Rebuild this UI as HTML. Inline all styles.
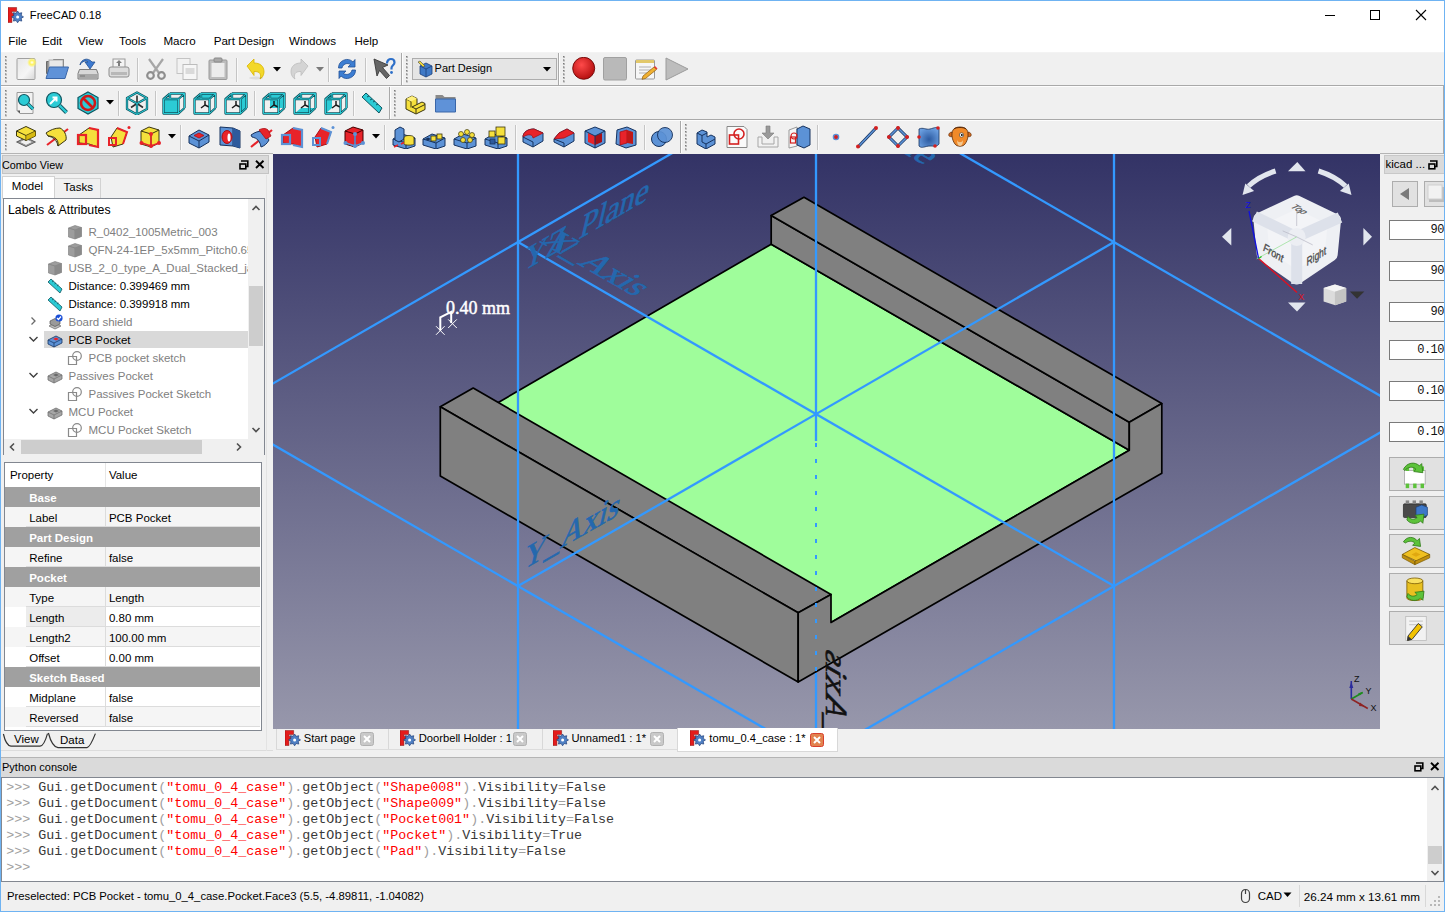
<!DOCTYPE html><html><head><meta charset="utf-8"><style>
html,body{margin:0;padding:0;}
body{width:1445px;height:912px;position:relative;overflow:hidden;background:#f0f0f0;font-family:"Liberation Sans",sans-serif;}
.t{position:absolute;line-height:1;white-space:nowrap;}
</style></head><body>
<div style="position:absolute;left:0px;top:0px;width:1445px;height:52px;background:#fff"></div>
<div style="position:absolute;left:0px;top:52px;width:1445px;height:1px;background:#f3f3f3"></div>
<div class="t" style="left:29.8px;top:10.22px;font-size:11.2px;color:#000;font-weight:normal;font-family:'Liberation Sans', sans-serif;">FreeCAD 0.18</div>
<svg style="position:absolute;left:8.3px;top:7.0px" width="16" height="16" viewBox="0 0 16 16"><path d="M0 0.4h8.6v4.2H3.9v1.6h2.8v2.9H3.9v6.5H0z" fill="#e41c1c" stroke="#7a0a0a" stroke-width=".5"/><polygon points="9.60,4.00 11.09,6.30 13.77,5.73 13.20,8.41 15.50,9.90 13.20,11.39 13.77,14.07 11.09,13.50 9.60,15.80 8.11,13.50 5.43,14.07 6.00,11.39 3.70,9.90 6.00,8.41 5.43,5.73 8.11,6.30" fill="#4f80c4" stroke="#1f3f7a" stroke-width=".7" stroke-linejoin="round"/><circle cx="9.6" cy="9.9" r="1.5" fill="#fff"/></svg>
<div class="t" style="left:8.3px;top:35.28px;font-size:11.6px;color:#000;font-weight:normal;font-family:'Liberation Sans', sans-serif;">File</div>
<div class="t" style="left:42.1px;top:35.28px;font-size:11.6px;color:#000;font-weight:normal;font-family:'Liberation Sans', sans-serif;">Edit</div>
<div class="t" style="left:78.1px;top:35.28px;font-size:11.6px;color:#000;font-weight:normal;font-family:'Liberation Sans', sans-serif;">View</div>
<div class="t" style="left:119.1px;top:35.28px;font-size:11.6px;color:#000;font-weight:normal;font-family:'Liberation Sans', sans-serif;">Tools</div>
<div class="t" style="left:163.4px;top:35.28px;font-size:11.6px;color:#000;font-weight:normal;font-family:'Liberation Sans', sans-serif;">Macro</div>
<div class="t" style="left:213.7px;top:35.28px;font-size:11.6px;color:#000;font-weight:normal;font-family:'Liberation Sans', sans-serif;">Part Design</div>
<div class="t" style="left:289.0px;top:35.28px;font-size:11.6px;color:#000;font-weight:normal;font-family:'Liberation Sans', sans-serif;">Windows</div>
<div class="t" style="left:354.4px;top:35.28px;font-size:11.6px;color:#000;font-weight:normal;font-family:'Liberation Sans', sans-serif;">Help</div>
<svg style="position:absolute;left:1320px;top:5px;" width="110" height="22" viewBox="0 0 110 22"><path d="M5 10.5h10" stroke="#000" stroke-width="1"/><rect x="50.5" y="5.5" width="9" height="9" fill="none" stroke="#000" stroke-width="1"/><path d="M96 5l10 10M106 5l-10 10" stroke="#000" stroke-width="1.1"/></svg>
<div style="position:absolute;left:0px;top:85px;width:1445px;height:1px;background:#a9a9a9"></div>
<div style="position:absolute;left:0px;top:86px;width:1445px;height:1px;background:#fdfdfd"></div>
<div style="position:absolute;left:0px;top:119px;width:1445px;height:1px;background:#a9a9a9"></div>
<div style="position:absolute;left:0px;top:120px;width:1445px;height:1px;background:#fdfdfd"></div>
<div style="position:absolute;left:1px;top:153px;width:272px;height:1px;background:#b4b4b4"></div>
<div style="position:absolute;left:2px;top:155px;width:267px;height:19px;background:#dadada;border:1px solid #c4c4c4;box-sizing:border-box"></div>
<div class="t" style="left:2.0px;top:159.56px;font-size:10.8px;color:#000;font-weight:normal;font-family:'Liberation Sans', sans-serif;">Combo View</div>
<svg style="position:absolute;left:236px;top:158px;" width="30" height="14" viewBox="0 0 30 14"><path d="M5 3h6.8v5.5H9.5" fill="none" stroke="#000" stroke-width="1.6"/><rect x="4" y="6" width="5.8" height="4.8" fill="none" stroke="#000" stroke-width="1.6"/><path d="M20 2.8l7.5 7.2M27.5 2.8L20 10" stroke="#000" stroke-width="1.9"/></svg>
<div style="position:absolute;left:54px;top:178px;width:47px;height:21px;background:#f0f0f0;border:1px solid #d2d2d2;box-sizing:border-box"></div>
<div style="position:absolute;left:2px;top:176px;width:53px;height:23px;background:#fff;border:1px solid #d2d2d2;border-bottom:none;box-sizing:border-box"></div>
<div class="t" style="left:11.8px;top:180.77px;font-size:11.5px;color:#000;font-weight:normal;font-family:'Liberation Sans', sans-serif;">Model</div>
<div class="t" style="left:63.6px;top:181.77px;font-size:11.5px;color:#000;font-weight:normal;font-family:'Liberation Sans', sans-serif;">Tasks</div>
<div style="position:absolute;left:3px;top:198px;width:262px;height:257px;background:#fff;border:1px solid #828790;box-sizing:border-box"></div>
<div class="t" style="left:8.0px;top:204.19px;font-size:12.3px;color:#000;font-weight:normal;font-family:'Liberation Sans', sans-serif;">Labels &amp; Attributes</div>
<div style="position:absolute;left:248px;top:199px;width:16px;height:240px;background:#f0f0f0"></div>
<div style="position:absolute;left:249px;top:286px;width:14px;height:60px;background:#cdcdcd"></div>
<div style="position:absolute;left:4px;top:439px;width:260px;height:16px;background:#f0f0f0"></div>
<div style="position:absolute;left:21px;top:440px;width:181px;height:14px;background:#cdcdcd"></div>
<svg style="position:absolute;left:248px;top:200px;" width="16" height="16" viewBox="0 0 16 16"><path d="M4.5 10l3.5-3.5 3.5 3.5" fill="none" stroke="#505050" stroke-width="1.6"/></svg>
<svg style="position:absolute;left:248px;top:422px;" width="16" height="16" viewBox="0 0 16 16"><path d="M4.5 6l3.5 3.5 3.5-3.5" fill="none" stroke="#505050" stroke-width="1.6"/></svg>
<svg style="position:absolute;left:4px;top:439px;" width="16" height="16" viewBox="0 0 16 16"><path d="M10 4.5l-3.5 3.5 3.5 3.5" fill="none" stroke="#505050" stroke-width="1.6"/></svg>
<svg style="position:absolute;left:231px;top:439px;" width="16" height="16" viewBox="0 0 16 16"><path d="M6 4.5l3.5 3.5-3.5 3.5" fill="none" stroke="#505050" stroke-width="1.6"/></svg>
<div style="position:absolute;left:44px;top:331px;width:204px;height:17px;background:#d9d9d9"></div>
<div style="position:absolute;left:4px;top:222px;width:244px;height:217px;overflow:hidden"><div style="position:absolute;left:-4px;top:-222px;width:400px;height:700px"><div class="t" style="left:88.5px;top:226.97px;font-size:11.5px;color:#808080;font-weight:normal;font-family:'Liberation Sans', sans-serif;">R_0402_1005Metric_003</div><svg style="position:absolute;left:67.0px;top:223.5px" width="16" height="16" viewBox="0 0 16 16"><path d="M1.5 4L8 1.5 14.5 3.5v9L8 15 1.5 13z" fill="#9d9d9d" stroke="#7a7a7a" stroke-width=".6"/><path d="M1.5 4L8 6l6.5-2.5M8 6v9" fill="none" stroke="#7e7e7e" stroke-width=".7"/><path d="M8 6l6.5-2.5v9L8 15z" fill="#8a8a8a"/></svg><div class="t" style="left:88.5px;top:244.97px;font-size:11.5px;color:#808080;font-weight:normal;font-family:'Liberation Sans', sans-serif;">QFN-24-1EP_5x5mm_Pitch0.65mm</div><svg style="position:absolute;left:67.0px;top:241.5px" width="16" height="16" viewBox="0 0 16 16"><path d="M1.5 4L8 1.5 14.5 3.5v9L8 15 1.5 13z" fill="#9d9d9d" stroke="#7a7a7a" stroke-width=".6"/><path d="M1.5 4L8 6l6.5-2.5M8 6v9" fill="none" stroke="#7e7e7e" stroke-width=".7"/><path d="M8 6l6.5-2.5v9L8 15z" fill="#8a8a8a"/></svg><div class="t" style="left:68.5px;top:262.97px;font-size:11.5px;color:#808080;font-weight:normal;font-family:'Liberation Sans', sans-serif;">USB_2_0_type_A_Dual_Stacked_jack</div><svg style="position:absolute;left:47.0px;top:259.5px" width="16" height="16" viewBox="0 0 16 16"><path d="M1.5 4L8 1.5 14.5 3.5v9L8 15 1.5 13z" fill="#9d9d9d" stroke="#7a7a7a" stroke-width=".6"/><path d="M1.5 4L8 6l6.5-2.5M8 6v9" fill="none" stroke="#7e7e7e" stroke-width=".7"/><path d="M8 6l6.5-2.5v9L8 15z" fill="#8a8a8a"/></svg><div class="t" style="left:68.5px;top:280.97px;font-size:11.5px;color:#000;font-weight:normal;font-family:'Liberation Sans', sans-serif;">Distance: 0.399469 mm</div><svg style="position:absolute;left:47.0px;top:277.5px" width="16" height="16" viewBox="0 0 16 16"><path d="M1 4l3-3 11 10-2 4z" fill="#2ccbd5" stroke="#0f5560" stroke-width=".8"/><path d="M5 4l1.5-1M7.5 6l1.5-1M10 8l1.5-1" stroke="#0f5560" stroke-width=".8"/></svg><div class="t" style="left:68.5px;top:298.97px;font-size:11.5px;color:#000;font-weight:normal;font-family:'Liberation Sans', sans-serif;">Distance: 0.399918 mm</div><svg style="position:absolute;left:47.0px;top:295.5px" width="16" height="16" viewBox="0 0 16 16"><path d="M1 4l3-3 11 10-2 4z" fill="#2ccbd5" stroke="#0f5560" stroke-width=".8"/><path d="M5 4l1.5-1M7.5 6l1.5-1M10 8l1.5-1" stroke="#0f5560" stroke-width=".8"/></svg><div class="t" style="left:68.5px;top:316.97px;font-size:11.5px;color:#808080;font-weight:normal;font-family:'Liberation Sans', sans-serif;">Board shield</div><svg style="position:absolute;left:47.0px;top:313.5px" width="16" height="16" viewBox="0 0 16 16"><path d="M2 12l6-3 6 3-6 3z" fill="#bdbdbd" stroke="#666" stroke-width=".7"/><path d="M3 7l5-2.5 5 2.5v3l-5 2.5-5-2.5z" fill="#9a9a9a" stroke="#555" stroke-width=".7"/><circle cx="12" cy="4" r="3.6" fill="#1a4fd8"/><path d="M10 4l1.5 1.5 2.5-3" fill="none" stroke="#fff" stroke-width="1.2"/></svg><svg style="position:absolute;left:28px;top:313px;" width="12" height="16" viewBox="0 0 12 16"><path d="M3.5 4.5l3.5 3.5-3.5 3.5" fill="none" stroke="#6a6a6a" stroke-width="1.3"/></svg><div class="t" style="left:68.5px;top:334.97px;font-size:11.5px;color:#000;font-weight:normal;font-family:'Liberation Sans', sans-serif;">PCB Pocket</div><svg style="position:absolute;left:47.0px;top:331.5px" width="16" height="16" viewBox="0 0 16 16"><path d="M1 8l8-4 6 3v4l-8 4-6-3z" fill="#5c92d6" stroke="#16325e" stroke-width=".8"/><path d="M1 8l6 3 8-4M7 11v4" fill="none" stroke="#16325e" stroke-width=".7"/><path d="M6 7l3-1.5 3 1.5-3 1.5z" fill="#e8232a"/></svg><svg style="position:absolute;left:28px;top:331px;" width="12" height="16" viewBox="0 0 12 16"><path d="M1.5 6l4 4 4-4" fill="none" stroke="#404040" stroke-width="1.4"/></svg><div class="t" style="left:88.5px;top:352.97px;font-size:11.5px;color:#808080;font-weight:normal;font-family:'Liberation Sans', sans-serif;">PCB pocket sketch</div><svg style="position:absolute;left:67.0px;top:349.5px" width="16" height="16" viewBox="0 0 16 16"><path d="M1.5 6.5h8v8h-8z" fill="none" stroke="#8a8a8a" stroke-width="1.2"/><circle cx="10" cy="6" r="4.3" fill="#fff" fill-opacity="0" stroke="#8a8a8a" stroke-width="1.2"/></svg><div class="t" style="left:68.5px;top:370.97px;font-size:11.5px;color:#808080;font-weight:normal;font-family:'Liberation Sans', sans-serif;">Passives Pocket</div><svg style="position:absolute;left:47.0px;top:367.5px" width="16" height="16" viewBox="0 0 16 16"><path d="M1 8l8-4 6 3v4l-8 4-6-3z" fill="#a6a6a6" stroke="#6e6e6e" stroke-width=".8"/><path d="M1 8l6 3 8-4M7 11v4" fill="none" stroke="#6e6e6e" stroke-width=".7"/><path d="M6 7l3-1.5 3 1.5-3 1.5z" fill="#6a6a6a"/></svg><svg style="position:absolute;left:28px;top:367px;" width="12" height="16" viewBox="0 0 12 16"><path d="M1.5 6l4 4 4-4" fill="none" stroke="#404040" stroke-width="1.4"/></svg><div class="t" style="left:88.5px;top:388.97px;font-size:11.5px;color:#808080;font-weight:normal;font-family:'Liberation Sans', sans-serif;">Passives Pocket Sketch</div><svg style="position:absolute;left:67.0px;top:385.5px" width="16" height="16" viewBox="0 0 16 16"><path d="M1.5 6.5h8v8h-8z" fill="none" stroke="#8a8a8a" stroke-width="1.2"/><circle cx="10" cy="6" r="4.3" fill="#fff" fill-opacity="0" stroke="#8a8a8a" stroke-width="1.2"/></svg><div class="t" style="left:68.5px;top:406.97px;font-size:11.5px;color:#808080;font-weight:normal;font-family:'Liberation Sans', sans-serif;">MCU Pocket</div><svg style="position:absolute;left:47.0px;top:403.5px" width="16" height="16" viewBox="0 0 16 16"><path d="M1 8l8-4 6 3v4l-8 4-6-3z" fill="#a6a6a6" stroke="#6e6e6e" stroke-width=".8"/><path d="M1 8l6 3 8-4M7 11v4" fill="none" stroke="#6e6e6e" stroke-width=".7"/><path d="M6 7l3-1.5 3 1.5-3 1.5z" fill="#6a6a6a"/></svg><svg style="position:absolute;left:28px;top:403px;" width="12" height="16" viewBox="0 0 12 16"><path d="M1.5 6l4 4 4-4" fill="none" stroke="#404040" stroke-width="1.4"/></svg><div class="t" style="left:88.5px;top:424.97px;font-size:11.5px;color:#808080;font-weight:normal;font-family:'Liberation Sans', sans-serif;">MCU Pocket Sketch</div><svg style="position:absolute;left:67.0px;top:421.5px" width="16" height="16" viewBox="0 0 16 16"><path d="M1.5 6.5h8v8h-8z" fill="none" stroke="#8a8a8a" stroke-width="1.2"/><circle cx="10" cy="6" r="4.3" fill="#fff" fill-opacity="0" stroke="#8a8a8a" stroke-width="1.2"/></svg></div></div>
<div style="position:absolute;left:4px;top:462px;width:258px;height:269px;background:#fff;border:1px solid #828790;box-sizing:border-box"></div>
<div style="position:absolute;left:105px;top:463px;width:1px;height:24px;background:#e6e6e6"></div>
<div class="t" style="left:9.9px;top:470.07px;font-size:11.5px;color:#000;font-weight:normal;font-family:'Liberation Sans', sans-serif;">Property</div>
<div class="t" style="left:108.9px;top:470.07px;font-size:11.5px;color:#000;font-weight:normal;font-family:'Liberation Sans', sans-serif;">Value</div>
<div style="position:absolute;left:5px;top:487px;width:255px;height:20px;background:#a0a0a0"></div>
<div class="t" style="left:29.2px;top:492.57px;font-size:11.5px;color:#fff;font-weight:bold;font-family:'Liberation Sans', sans-serif;">Base</div>
<div style="position:absolute;left:5px;top:507px;width:255px;height:20px;background:#f5f5f5"></div>
<div style="position:absolute;left:26px;top:526px;width:234px;height:1px;background:#dcdcdc"></div>
<div style="position:absolute;left:105px;top:507px;width:1px;height:20px;background:#dcdcdc"></div>
<div class="t" style="left:29.2px;top:512.57px;font-size:11.5px;color:#000;font-weight:normal;font-family:'Liberation Sans', sans-serif;">Label</div>
<div class="t" style="left:108.9px;top:512.57px;font-size:11.5px;color:#000;font-weight:normal;font-family:'Liberation Sans', sans-serif;">PCB Pocket</div>
<div style="position:absolute;left:5px;top:527px;width:255px;height:20px;background:#a0a0a0"></div>
<div class="t" style="left:29.2px;top:532.57px;font-size:11.5px;color:#fff;font-weight:bold;font-family:'Liberation Sans', sans-serif;">Part Design</div>
<div style="position:absolute;left:5px;top:547px;width:255px;height:20px;background:#f5f5f5"></div>
<div style="position:absolute;left:26px;top:566px;width:234px;height:1px;background:#dcdcdc"></div>
<div style="position:absolute;left:105px;top:547px;width:1px;height:20px;background:#dcdcdc"></div>
<div class="t" style="left:29.2px;top:552.57px;font-size:11.5px;color:#000;font-weight:normal;font-family:'Liberation Sans', sans-serif;">Refine</div>
<div class="t" style="left:108.9px;top:552.57px;font-size:11.5px;color:#000;font-weight:normal;font-family:'Liberation Sans', sans-serif;">false</div>
<div style="position:absolute;left:5px;top:567px;width:255px;height:20px;background:#a0a0a0"></div>
<div class="t" style="left:29.2px;top:572.57px;font-size:11.5px;color:#fff;font-weight:bold;font-family:'Liberation Sans', sans-serif;">Pocket</div>
<div style="position:absolute;left:5px;top:587px;width:255px;height:20px;background:#f5f5f5"></div>
<div style="position:absolute;left:26px;top:606px;width:234px;height:1px;background:#dcdcdc"></div>
<div style="position:absolute;left:105px;top:587px;width:1px;height:20px;background:#dcdcdc"></div>
<div class="t" style="left:29.2px;top:592.57px;font-size:11.5px;color:#000;font-weight:normal;font-family:'Liberation Sans', sans-serif;">Type</div>
<div class="t" style="left:108.9px;top:592.57px;font-size:11.5px;color:#000;font-weight:normal;font-family:'Liberation Sans', sans-serif;">Length</div>
<div style="position:absolute;left:5px;top:607px;width:255px;height:20px;background:#fff"></div>
<div style="position:absolute;left:26px;top:607px;width:79px;height:20px;background:#ececec"></div>
<div style="position:absolute;left:26px;top:626px;width:234px;height:1px;background:#dcdcdc"></div>
<div style="position:absolute;left:105px;top:607px;width:1px;height:20px;background:#dcdcdc"></div>
<div class="t" style="left:29.2px;top:612.57px;font-size:11.5px;color:#000;font-weight:normal;font-family:'Liberation Sans', sans-serif;">Length</div>
<div class="t" style="left:108.9px;top:612.57px;font-size:11.5px;color:#000;font-weight:normal;font-family:'Liberation Sans', sans-serif;">0.80 mm</div>
<div style="position:absolute;left:5px;top:627px;width:255px;height:20px;background:#f5f5f5"></div>
<div style="position:absolute;left:26px;top:646px;width:234px;height:1px;background:#dcdcdc"></div>
<div style="position:absolute;left:105px;top:627px;width:1px;height:20px;background:#dcdcdc"></div>
<div class="t" style="left:29.2px;top:632.57px;font-size:11.5px;color:#000;font-weight:normal;font-family:'Liberation Sans', sans-serif;">Length2</div>
<div class="t" style="left:108.9px;top:632.57px;font-size:11.5px;color:#000;font-weight:normal;font-family:'Liberation Sans', sans-serif;">100.00 mm</div>
<div style="position:absolute;left:5px;top:647px;width:255px;height:20px;background:#fff"></div>
<div style="position:absolute;left:26px;top:666px;width:234px;height:1px;background:#dcdcdc"></div>
<div style="position:absolute;left:105px;top:647px;width:1px;height:20px;background:#dcdcdc"></div>
<div class="t" style="left:29.2px;top:652.57px;font-size:11.5px;color:#000;font-weight:normal;font-family:'Liberation Sans', sans-serif;">Offset</div>
<div class="t" style="left:108.9px;top:652.57px;font-size:11.5px;color:#000;font-weight:normal;font-family:'Liberation Sans', sans-serif;">0.00 mm</div>
<div style="position:absolute;left:5px;top:667px;width:255px;height:20px;background:#a0a0a0"></div>
<div class="t" style="left:29.2px;top:672.57px;font-size:11.5px;color:#fff;font-weight:bold;font-family:'Liberation Sans', sans-serif;">Sketch Based</div>
<div style="position:absolute;left:5px;top:687px;width:255px;height:20px;background:#fff"></div>
<div style="position:absolute;left:26px;top:706px;width:234px;height:1px;background:#dcdcdc"></div>
<div style="position:absolute;left:105px;top:687px;width:1px;height:20px;background:#dcdcdc"></div>
<div class="t" style="left:29.2px;top:692.57px;font-size:11.5px;color:#000;font-weight:normal;font-family:'Liberation Sans', sans-serif;">Midplane</div>
<div class="t" style="left:108.9px;top:692.57px;font-size:11.5px;color:#000;font-weight:normal;font-family:'Liberation Sans', sans-serif;">false</div>
<div style="position:absolute;left:5px;top:707px;width:255px;height:20px;background:#f5f5f5"></div>
<div style="position:absolute;left:26px;top:726px;width:234px;height:1px;background:#dcdcdc"></div>
<div style="position:absolute;left:105px;top:707px;width:1px;height:20px;background:#dcdcdc"></div>
<div class="t" style="left:29.2px;top:712.57px;font-size:11.5px;color:#000;font-weight:normal;font-family:'Liberation Sans', sans-serif;">Reversed</div>
<div class="t" style="left:108.9px;top:712.57px;font-size:11.5px;color:#000;font-weight:normal;font-family:'Liberation Sans', sans-serif;">false</div>
<svg style="position:absolute;left:0px;top:729px;" width="100" height="22" viewBox="0 0 100 22"><path d="M3.4 5 Q6 16.5 11 17.2 H40 Q44 17 47.5 4.6" fill="#f0f0f0" stroke="#333" stroke-width="1.2"/><path d="M48.4 4 Q52 17.8 58 18.6 H87 Q90 18.3 95.4 4.6" fill="#f0f0f0" stroke="#333" stroke-width="1.2"/></svg>
<div style="position:absolute;left:1px;top:750px;width:272px;height:1px;background:#dcdcdc"></div>
<div class="t" style="left:14.0px;top:733.97px;font-size:11.5px;color:#000;font-weight:normal;font-family:'Liberation Sans', sans-serif;">View</div>
<div class="t" style="left:60.0px;top:734.97px;font-size:11.5px;color:#000;font-weight:normal;font-family:'Liberation Sans', sans-serif;">Data</div>
<div style="position:absolute;left:266px;top:175px;width:1px;height:576px;background:#e3e3e3"></div>
<svg style="position:absolute;left:273px;top:154px" width="1107" height="575" viewBox="273 154 1107 575" ><defs><linearGradient id="bg" x1="0" y1="0" x2="0" y2="1"><stop offset="0" stop-color="rgb(51,51,102)"/><stop offset="1" stop-color="rgb(151,151,171)"/></linearGradient></defs><rect x="273" y="154" width="1107" height="575" fill="url(#bg)"/><polygon points="473.2,417 771.2,244.2 1129.3,450.2 831,622.5" fill="#9ffd9b" stroke="#000" stroke-width="1.7" stroke-linejoin="round"/><polygon points="771.2,215.5 1129.3,422.2 1129.3,450.2 771.2,244.2" fill="#808080" stroke="#000" stroke-width="1.7" stroke-linejoin="round"/><polygon points="804,197.3 771.2,215.5 1129.3,422.2 1161.8,403.6" fill="#808080" stroke="#000" stroke-width="1.7" stroke-linejoin="round"/><polygon points="473.2,388.1 440.3,406.8 798.2,612.8 831,594.5" fill="#808080" stroke="#000" stroke-width="1.7" stroke-linejoin="round"/><polygon points="440.3,406.8 798.2,612.8 798.2,682 440.3,476.1" fill="#808080" stroke="#000" stroke-width="1.7" stroke-linejoin="round"/><polygon points="798.2,612.8 831,594.5 831,622.5 1129.3,450.2 1129.3,422.2 1161.8,403.6 1161.8,473.2 798.2,682" fill="#808080" stroke="#000" stroke-width="1.7" stroke-linejoin="round"/><line x1="518" y1="154" x2="518" y2="729" stroke="#3399ff" stroke-width="2.3"/><line x1="1114" y1="154" x2="1114" y2="729" stroke="#3399ff" stroke-width="2.3"/><line x1="816" y1="154" x2="816" y2="441" stroke="#3399ff" stroke-width="2.3"/><line x1="816" y1="673" x2="816" y2="729" stroke="#3399ff" stroke-width="2.3"/><line x1="220" y1="414.1" x2="1114" y2="-101.9" stroke="#3399ff" stroke-width="2.3"/><line x1="518" y1="586.1" x2="1114" y2="242.1" stroke="#3399ff" stroke-width="2.3"/><line x1="518" y1="930.1" x2="1412" y2="414.1" stroke="#3399ff" stroke-width="2.3"/><line x1="220" y1="414.1" x2="1114" y2="930.1" stroke="#3399ff" stroke-width="2.3"/><line x1="518" y1="242.1" x2="1114" y2="586.1" stroke="#3399ff" stroke-width="2.3"/><line x1="518" y1="-101.9" x2="1412" y2="414.1" stroke="#3399ff" stroke-width="2.3"/><line x1="816" y1="441" x2="816" y2="673" stroke="#3399ff" stroke-width="2" stroke-dasharray="4 12" stroke-dashoffset="-2"/><text transform="matrix(0.866 0.5 -0.866 0.5 796 91)" font-family="Liberation Serif" font-style="normal" font-size="35.5" fill="#2468ae" stroke="#2468ae" stroke-width="0.7">XY_Plane</text><text transform="matrix(0.866 -0.5 -0.24 1.03 522 272)" font-family="Liberation Serif" font-style="normal" font-size="35.5" fill="#2468ae" stroke="#2468ae" stroke-width="0.7">YZ_Plane</text><text transform="matrix(0.866 0.5 -0.866 0.5 539 241.5)" font-family="Liberation Serif" font-style="normal" font-size="35.5" fill="#2468ae" stroke="#2468ae" stroke-width="0.7">X_Axis</text><text transform="matrix(0.866 -0.5 -0.24 1.03 522 570.5)" font-family="Liberation Serif" font-style="normal" font-size="35.5" fill="#2468ae" stroke="#2468ae" stroke-width="0.7">Y_Axis</text><text transform="matrix(0 -1 -0.866 -0.5 826 754)" font-family="Liberation Serif" font-style="normal" font-size="35.5" fill="#111" stroke="#111" stroke-width="0.7">Z_Axis</text><path d="M440.3 330.5V317.4l10.9-5.5V323" fill="none" stroke="#fff" stroke-width="2"/><path d="M436 326.2l8.6 8.6M444.6 326.2l-8.6 8.6M448.2 319.4l8.6 8.6M456.8 319.4l-8.6 8.6" stroke="#fff" stroke-width="1"/><text x="446" y="314" font-family="Liberation Serif" font-size="18" fill="#fff" stroke="#fff" stroke-width="0.45">0.40 mm</text><path d="M1288 171.3h17.5l-8.2-9.3z" fill="#e2e6ee"/><path d="M1288 302.5h17.5l-8.5 9z" fill="#e2e6ee"/><path d="M1231.3 228v17.5l-9.3-8.8z" fill="#e2e6ee"/><path d="M1363.4 228v17.5l8.6-8.8z" fill="#e2e6ee"/><path d="M1275.6 171c-11 3.5-19.5 8-27 15" fill="none" stroke="#e2e6ee" stroke-width="5"/><path d="M1242.5 195l2.8-11.5 8.8 7.5z" fill="#e2e6ee"/><path d="M1318.5 171c11 3.5 19.5 8 27 15" fill="none" stroke="#e2e6ee" stroke-width="5"/><path d="M1351.5 195l-2.8-11.5-8.8 7.5z" fill="#e2e6ee"/><polygon points="1296.7,201.9 1334.519743436036,220.04270096269065 1331.16598733386,254.65258141568162 1296.7,277.9 1263.302060841928,254.59141479949545 1259.8969053430421,219.02171942019817" fill="#f3f4f7" stroke="#eef0f4" stroke-width="13" stroke-linejoin="round"/><path d="M1296.7 236.9L1254.5 216.4M1296.7 236.9L1340 217.6M1296.7 236.9V283.9" stroke="#dde1ea" stroke-width="11"/><circle cx="1296.7" cy="236.9" r="9" fill="#eceef3"/><path d="M1296.7 226v-15M1296.7 236.9l-14 -6M1296.7 236.9l16 8" stroke="#b8b8c6" stroke-width="1" opacity=".7"/><path d="M1296.7 236.9l-40 22" stroke="#9fe39f" stroke-width="1" opacity=".8"/><text transform="matrix(.75 .43 -.75 .43 1290 207)" font-family="Liberation Sans" font-style="italic" font-size="11" fill="#555" stroke="#555" stroke-width=".3">Top</text><text transform="matrix(.8 .5 -.15 1.05 1263 250.5)" font-family="Liberation Sans" font-style="italic" font-size="10.5" fill="#4a4a4a" stroke="#4a4a4a" stroke-width=".3">Front</text><text transform="matrix(.8 -.5 .15 1.05 1307 266)" font-family="Liberation Sans" font-style="italic" font-size="10.5" fill="#4a4a4a" stroke="#4a4a4a" stroke-width=".3">Right</text><path d="M1249 211L1258.6 258.5" stroke="#1010e0" stroke-width="1.3"/><path d="M1258.6 258.5L1297 292.5" stroke="#e01020" stroke-width="1.3"/><path d="M1258.6 258.5l3-2" stroke="#20c020" stroke-width="1.3"/><text x="1245.5" y="207.5" font-family="Liberation Sans" font-size="8.5" fill="#1010e0">Z</text><text x="1298.5" y="300" font-family="Liberation Sans" font-size="8.5" fill="#e01020">X</text><path d="M1323.6 288l11-3.6 11.6 3.6v13.5l-11 3.7-11.6-3.7z" fill="#dcdcdc"/><path d="M1323.6 288l11.3 3.8 11.3-3.8-11-3.6z" fill="#f4f4f4"/><path d="M1334.9 291.8v13.4l11.3-3.7V288z" fill="#c4c4c4"/><path d="M1349.8 291.6h14.5l-7.2 7.2z" fill="#333"/><path d="M1351.3 699V681" stroke="#2b2b9c" stroke-width="1.6"/><path d="M1349.3 688l2-6 2 6z" fill="#2b2b9c"/><path d="M1351.3 699l11.5-6.5" stroke="#1e8c1e" stroke-width="1.6"/><path d="M1358 693.5l4.5-1.8-2.5 3.5z" fill="#1e8c1e"/><path d="M1351.3 699l16.5 9.5" stroke="#8e2424" stroke-width="1.6"/><path d="M1360 702.5l4.5 4-5.5-.5z" fill="#8e2424"/><text x="1354" y="681.5" font-family="Liberation Sans" font-size="9" fill="#111">Z</text><text x="1365.5" y="693.5" font-family="Liberation Sans" font-size="9" fill="#111">Y</text><text x="1370.5" y="710.5" font-family="Liberation Sans" font-size="9" fill="#111">X</text></svg>
<div style="position:absolute;left:1380px;top:154px;width:64px;height:597px;background:#f0f0f0"></div>
<div style="position:absolute;left:1380px;top:153px;width:64px;height:1px;background:#b4b4b4"></div>
<div style="position:absolute;left:1443px;top:85px;width:1px;height:69px;background:#a9a9a9"></div>
<div style="position:absolute;left:1384px;top:155px;width:60px;height:19px;background:#dadada;border:1px solid #c8c8c8;border-right:none;box-sizing:border-box"></div>
<div class="t" style="left:1385.5px;top:158.97px;font-size:11.5px;color:#000;font-weight:normal;font-family:'Liberation Sans', sans-serif;">kicad ...</div>
<svg style="position:absolute;left:1425px;top:158px;" width="18" height="14" viewBox="0 0 18 14"><path d="M5 3h6.8v5.5H9.5" fill="none" stroke="#000" stroke-width="1.6"/><rect x="4" y="6" width="5.8" height="4.8" fill="none" stroke="#000" stroke-width="1.6"/></svg>
<div style="position:absolute;left:1392px;top:181px;width:26px;height:26px;background:#e1e1e1;border:1px solid #adadad;box-sizing:border-box"></div>
<svg style="position:absolute;left:1392px;top:181px;" width="26" height="26" viewBox="0 0 26 26"><path d="M8 13l9-6v12z" fill="#7a7a7a"/></svg>
<div style="position:absolute;left:1424px;top:181px;width:21px;height:26px;background:#e1e1e1;border:1px solid #adadad;border-right:none;box-sizing:border-box"></div>
<svg style="position:absolute;left:1424px;top:181px;" width="21" height="26" viewBox="0 0 21 26"><rect x="5" y="6" width="16" height="15" fill="#bdbdbd"/><rect x="4" y="4" width="14" height="14" fill="#f2f2f2" stroke="#d0d0d0"/></svg>
<div style="position:absolute;left:1389px;top:220px;width:56px;height:20px;background:#fff;border:1px solid #7a7a7a;border-right:none;box-sizing:border-box"></div>
<div class="t" style="right:1px;top:223.5px;font-size:12px;font-family:'Liberation Mono', monospace;letter-spacing:-0.5px;color:#111">90</div>
<div style="position:absolute;left:1389px;top:261px;width:56px;height:20px;background:#fff;border:1px solid #7a7a7a;border-right:none;box-sizing:border-box"></div>
<div class="t" style="right:1px;top:264.5px;font-size:12px;font-family:'Liberation Mono', monospace;letter-spacing:-0.5px;color:#111">90</div>
<div style="position:absolute;left:1389px;top:302px;width:56px;height:20px;background:#fff;border:1px solid #7a7a7a;border-right:none;box-sizing:border-box"></div>
<div class="t" style="right:1px;top:305.5px;font-size:12px;font-family:'Liberation Mono', monospace;letter-spacing:-0.5px;color:#111">90</div>
<div style="position:absolute;left:1389px;top:340px;width:56px;height:20px;background:#fff;border:1px solid #7a7a7a;border-right:none;box-sizing:border-box"></div>
<div class="t" style="right:1px;top:343.5px;font-size:12px;font-family:'Liberation Mono', monospace;letter-spacing:-0.5px;color:#111">0.10</div>
<div style="position:absolute;left:1389px;top:381px;width:56px;height:20px;background:#fff;border:1px solid #7a7a7a;border-right:none;box-sizing:border-box"></div>
<div class="t" style="right:1px;top:384.5px;font-size:12px;font-family:'Liberation Mono', monospace;letter-spacing:-0.5px;color:#111">0.10</div>
<div style="position:absolute;left:1389px;top:422px;width:56px;height:20px;background:#fff;border:1px solid #7a7a7a;border-right:none;box-sizing:border-box"></div>
<div class="t" style="right:1px;top:425.5px;font-size:12px;font-family:'Liberation Mono', monospace;letter-spacing:-0.5px;color:#111">0.10</div>
<div style="position:absolute;left:1389px;top:457px;width:56px;height:34px;background:#e1e1e1;border:1px solid #adadad;border-right:none;box-sizing:border-box"></div>
<div style="position:absolute;left:1389px;top:496px;width:56px;height:34px;background:#e1e1e1;border:1px solid #adadad;border-right:none;box-sizing:border-box"></div>
<div style="position:absolute;left:1389px;top:534px;width:56px;height:34px;background:#e1e1e1;border:1px solid #adadad;border-right:none;box-sizing:border-box"></div>
<div style="position:absolute;left:1389px;top:573px;width:56px;height:34px;background:#e1e1e1;border:1px solid #adadad;border-right:none;box-sizing:border-box"></div>
<div style="position:absolute;left:1389px;top:611px;width:56px;height:34px;background:#e1e1e1;border:1px solid #adadad;border-right:none;box-sizing:border-box"></div>
<div style="position:absolute;left:273px;top:729px;width:1107px;height:22px;background:#f0f0f0"></div>
<div style="position:absolute;left:275.5px;top:729px;width:1px;height:20px;background:#d8d8d8"></div>
<div style="position:absolute;left:275.5px;top:749px;width:112.5px;height:1px;background:#dcdcdc"></div>
<div class="t" style="left:303.8px;top:733.22px;font-size:11.2px;color:#000;font-weight:normal;font-family:'Liberation Sans', sans-serif;">Start page</div>
<svg style="position:absolute;left:360.2px;top:732px;" width="14" height="14" viewBox="0 0 14 14"><rect x="0.5" y="0.5" width="13" height="13" rx="2" fill="#c9c9c9" stroke="#b0b0b0"/><path d="M4 4l6 6M10 4l-6 6" stroke="#fff" stroke-width="2"/></svg>
<svg style="position:absolute;left:285.3px;top:730.0px" width="16" height="16" viewBox="0 0 16 16"><path d="M0 0.4h8.6v4.2H3.9v1.6h2.8v2.9H3.9v6.5H0z" fill="#e41c1c" stroke="#7a0a0a" stroke-width=".5"/><polygon points="9.60,4.00 11.09,6.30 13.77,5.73 13.20,8.41 15.50,9.90 13.20,11.39 13.77,14.07 11.09,13.50 9.60,15.80 8.11,13.50 5.43,14.07 6.00,11.39 3.70,9.90 6.00,8.41 5.43,5.73 8.11,6.30" fill="#4f80c4" stroke="#1f3f7a" stroke-width=".7" stroke-linejoin="round"/><circle cx="9.6" cy="9.9" r="1.5" fill="#fff"/></svg>
<div style="position:absolute;left:388px;top:729px;width:1px;height:20px;background:#d8d8d8"></div>
<div style="position:absolute;left:388px;top:749px;width:154px;height:1px;background:#dcdcdc"></div>
<div class="t" style="left:418.7px;top:733.22px;font-size:11.2px;color:#000;font-weight:normal;font-family:'Liberation Sans', sans-serif;">Doorbell Holder : 1</div>
<svg style="position:absolute;left:513px;top:732px;" width="14" height="14" viewBox="0 0 14 14"><rect x="0.5" y="0.5" width="13" height="13" rx="2" fill="#c9c9c9" stroke="#b0b0b0"/><path d="M4 4l6 6M10 4l-6 6" stroke="#fff" stroke-width="2"/></svg>
<svg style="position:absolute;left:400.3px;top:730.0px" width="16" height="16" viewBox="0 0 16 16"><path d="M0 0.4h8.6v4.2H3.9v1.6h2.8v2.9H3.9v6.5H0z" fill="#e41c1c" stroke="#7a0a0a" stroke-width=".5"/><polygon points="9.60,4.00 11.09,6.30 13.77,5.73 13.20,8.41 15.50,9.90 13.20,11.39 13.77,14.07 11.09,13.50 9.60,15.80 8.11,13.50 5.43,14.07 6.00,11.39 3.70,9.90 6.00,8.41 5.43,5.73 8.11,6.30" fill="#4f80c4" stroke="#1f3f7a" stroke-width=".7" stroke-linejoin="round"/><circle cx="9.6" cy="9.9" r="1.5" fill="#fff"/></svg>
<div style="position:absolute;left:542px;top:729px;width:1px;height:20px;background:#d8d8d8"></div>
<div style="position:absolute;left:542px;top:749px;width:134.5px;height:1px;background:#dcdcdc"></div>
<div class="t" style="left:571.5px;top:733.22px;font-size:11.2px;color:#000;font-weight:normal;font-family:'Liberation Sans', sans-serif;">Unnamed1 : 1*</div>
<svg style="position:absolute;left:650px;top:732px;" width="14" height="14" viewBox="0 0 14 14"><rect x="0.5" y="0.5" width="13" height="13" rx="2" fill="#c9c9c9" stroke="#b0b0b0"/><path d="M4 4l6 6M10 4l-6 6" stroke="#fff" stroke-width="2"/></svg>
<svg style="position:absolute;left:552.8px;top:730.0px" width="16" height="16" viewBox="0 0 16 16"><path d="M0 0.4h8.6v4.2H3.9v1.6h2.8v2.9H3.9v6.5H0z" fill="#e41c1c" stroke="#7a0a0a" stroke-width=".5"/><polygon points="9.60,4.00 11.09,6.30 13.77,5.73 13.20,8.41 15.50,9.90 13.20,11.39 13.77,14.07 11.09,13.50 9.60,15.80 8.11,13.50 5.43,14.07 6.00,11.39 3.70,9.90 6.00,8.41 5.43,5.73 8.11,6.30" fill="#4f80c4" stroke="#1f3f7a" stroke-width=".7" stroke-linejoin="round"/><circle cx="9.6" cy="9.9" r="1.5" fill="#fff"/></svg>
<div style="position:absolute;left:676.5px;top:728px;width:161.0px;height:24px;background:#fff;border:1px solid #d8d8d8;border-top:none;box-sizing:border-box"></div>
<div class="t" style="left:709.3px;top:733.42px;font-size:11.2px;color:#000;font-weight:normal;font-family:'Liberation Sans', sans-serif;">tomu_0.4_case : 1*</div>
<svg style="position:absolute;left:810px;top:733px;" width="14" height="14" viewBox="0 0 14 14"><rect x="0.5" y="0.5" width="13" height="13" rx="2" fill="#e2834f" stroke="#d8402e"/><path d="M4 4l6 6M10 4l-6 6" stroke="#fff" stroke-width="2"/></svg>
<svg style="position:absolute;left:689.8px;top:730.0px" width="16" height="16" viewBox="0 0 16 16"><path d="M0 0.4h8.6v4.2H3.9v1.6h2.8v2.9H3.9v6.5H0z" fill="#e41c1c" stroke="#7a0a0a" stroke-width=".5"/><polygon points="9.60,4.00 11.09,6.30 13.77,5.73 13.20,8.41 15.50,9.90 13.20,11.39 13.77,14.07 11.09,13.50 9.60,15.80 8.11,13.50 5.43,14.07 6.00,11.39 3.70,9.90 6.00,8.41 5.43,5.73 8.11,6.30" fill="#4f80c4" stroke="#1f3f7a" stroke-width=".7" stroke-linejoin="round"/><circle cx="9.6" cy="9.9" r="1.5" fill="#fff"/></svg>
<div style="position:absolute;left:837px;top:729px;width:1px;height:20px;background:#d8d8d8"></div>
<div style="position:absolute;left:1px;top:757px;width:1443px;height:1px;background:#b4b4b4"></div>
<div style="position:absolute;left:1px;top:758px;width:1443px;height:19px;background:#dadada"></div>
<div class="t" style="left:2.0px;top:761.69px;font-size:11.0px;color:#000;font-weight:normal;font-family:'Liberation Sans', sans-serif;">Python console</div>
<svg style="position:absolute;left:1411px;top:760px;" width="34" height="16" viewBox="0 0 34 16"><path d="M5 3h6.8v5.5H9.5" fill="none" stroke="#000" stroke-width="1.6"/><rect x="4" y="6" width="5.8" height="4.8" fill="none" stroke="#000" stroke-width="1.6"/><path d="M20 2.8l7.5 7.2M27.5 2.8L20 10" stroke="#000" stroke-width="1.9"/></svg>
<div style="position:absolute;left:1px;top:777px;width:1443px;height:105px;background:#fff;border:1px solid #828790;box-sizing:border-box"></div>
<div style="position:absolute;left:1427px;top:778px;width:16px;height:103px;background:#f0f0f0"></div>
<div style="position:absolute;left:1428px;top:846px;width:14px;height:18px;background:#cdcdcd"></div>
<svg style="position:absolute;left:1427px;top:780px;" width="16" height="16" viewBox="0 0 16 16"><path d="M4.5 10l3.5-3.5 3.5 3.5" fill="none" stroke="#505050" stroke-width="1.6"/></svg>
<svg style="position:absolute;left:1427px;top:865px;" width="16" height="16" viewBox="0 0 16 16"><path d="M4.5 6l3.5 3.5 3.5-3.5" fill="none" stroke="#505050" stroke-width="1.6"/></svg>
<div class="t" style="left:6.2px;top:780.68px;font-size:13.33px;color:#000;font-weight:normal;font-family:'Liberation Mono', monospace;"><span style="color:#a0a0a0">&gt;&gt;&gt; </span><span style="color:#383838">Gui</span><span style="color:#a0a0a0">.</span><span style="color:#383838">getDocument</span><span style="color:#a0a0a0">(</span><span style="color:#ff0000">"tomu_0_4_case"</span><span style="color:#a0a0a0">)</span><span style="color:#a0a0a0">.</span><span style="color:#383838">getObject</span><span style="color:#a0a0a0">(</span><span style="color:#ff0000">"Shape008"</span><span style="color:#a0a0a0">)</span><span style="color:#a0a0a0">.</span><span style="color:#383838">Visibility</span><span style="color:#a0a0a0">=</span><span style="color:#383838">False</span></div>
<div class="t" style="left:6.2px;top:796.68px;font-size:13.33px;color:#000;font-weight:normal;font-family:'Liberation Mono', monospace;"><span style="color:#a0a0a0">&gt;&gt;&gt; </span><span style="color:#383838">Gui</span><span style="color:#a0a0a0">.</span><span style="color:#383838">getDocument</span><span style="color:#a0a0a0">(</span><span style="color:#ff0000">"tomu_0_4_case"</span><span style="color:#a0a0a0">)</span><span style="color:#a0a0a0">.</span><span style="color:#383838">getObject</span><span style="color:#a0a0a0">(</span><span style="color:#ff0000">"Shape009"</span><span style="color:#a0a0a0">)</span><span style="color:#a0a0a0">.</span><span style="color:#383838">Visibility</span><span style="color:#a0a0a0">=</span><span style="color:#383838">False</span></div>
<div class="t" style="left:6.2px;top:812.68px;font-size:13.33px;color:#000;font-weight:normal;font-family:'Liberation Mono', monospace;"><span style="color:#a0a0a0">&gt;&gt;&gt; </span><span style="color:#383838">Gui</span><span style="color:#a0a0a0">.</span><span style="color:#383838">getDocument</span><span style="color:#a0a0a0">(</span><span style="color:#ff0000">"tomu_0_4_case"</span><span style="color:#a0a0a0">)</span><span style="color:#a0a0a0">.</span><span style="color:#383838">getObject</span><span style="color:#a0a0a0">(</span><span style="color:#ff0000">"Pocket001"</span><span style="color:#a0a0a0">)</span><span style="color:#a0a0a0">.</span><span style="color:#383838">Visibility</span><span style="color:#a0a0a0">=</span><span style="color:#383838">False</span></div>
<div class="t" style="left:6.2px;top:828.68px;font-size:13.33px;color:#000;font-weight:normal;font-family:'Liberation Mono', monospace;"><span style="color:#a0a0a0">&gt;&gt;&gt; </span><span style="color:#383838">Gui</span><span style="color:#a0a0a0">.</span><span style="color:#383838">getDocument</span><span style="color:#a0a0a0">(</span><span style="color:#ff0000">"tomu_0_4_case"</span><span style="color:#a0a0a0">)</span><span style="color:#a0a0a0">.</span><span style="color:#383838">getObject</span><span style="color:#a0a0a0">(</span><span style="color:#ff0000">"Pocket"</span><span style="color:#a0a0a0">)</span><span style="color:#a0a0a0">.</span><span style="color:#383838">Visibility</span><span style="color:#a0a0a0">=</span><span style="color:#383838">True</span></div>
<div class="t" style="left:6.2px;top:844.68px;font-size:13.33px;color:#000;font-weight:normal;font-family:'Liberation Mono', monospace;"><span style="color:#a0a0a0">&gt;&gt;&gt; </span><span style="color:#383838">Gui</span><span style="color:#a0a0a0">.</span><span style="color:#383838">getDocument</span><span style="color:#a0a0a0">(</span><span style="color:#ff0000">"tomu_0_4_case"</span><span style="color:#a0a0a0">)</span><span style="color:#a0a0a0">.</span><span style="color:#383838">getObject</span><span style="color:#a0a0a0">(</span><span style="color:#ff0000">"Pad"</span><span style="color:#a0a0a0">)</span><span style="color:#a0a0a0">.</span><span style="color:#383838">Visibility</span><span style="color:#a0a0a0">=</span><span style="color:#383838">False</span></div>
<div class="t" style="left:6.2px;top:860.68px;font-size:13.33px;color:#000;font-weight:normal;font-family:'Liberation Mono', monospace;"><span style="color:#a0a0a0">&gt;&gt;&gt;</span></div>
<div class="t" style="left:7.0px;top:891.03px;font-size:11.3px;color:#000;font-weight:normal;font-family:'Liberation Sans', sans-serif;">Preselected: PCB Pocket - tomu_0_4_case.Pocket.Face3 (5.5, -4.89811, -1.04082)</div>
<svg style="position:absolute;left:1238px;top:887px;" width="16" height="18" viewBox="0 0 16 18"><rect x="3.5" y="2.5" width="8" height="13" rx="4" fill="none" stroke="#404040" stroke-width="1.2"/><path d="M7.5 3v4" stroke="#404040" stroke-width="1.2"/></svg>
<div class="t" style="left:1257.8px;top:890.87px;font-size:11.5px;color:#000;font-weight:normal;font-family:'Liberation Sans', sans-serif;">CAD</div>
<svg style="position:absolute;left:1283px;top:891px;" width="10" height="8" viewBox="0 0 10 8"><path d="M0.5 1.5h8l-4 4.5z" fill="#000"/></svg>
<div style="position:absolute;left:1299px;top:885px;width:1px;height:22px;background:#d8d8d8"></div>
<div class="t" style="left:1303.8px;top:890.70px;font-size:11.7px;color:#000;font-weight:normal;font-family:'Liberation Sans', sans-serif;">26.24 mm x 13.61 mm</div>
<div style="position:absolute;left:1425px;top:885px;width:1px;height:22px;background:#d8d8d8"></div>
<svg style="position:absolute;left:1430px;top:896px;" width="12" height="12" viewBox="0 0 12 12"><g fill="#b8b8b8"><rect x="8" y="8" width="2" height="2"/><rect x="4" y="8" width="2" height="2"/><rect x="8" y="4" width="2" height="2"/><rect x="0" y="8" width="2" height="2"/><rect x="4" y="4" width="2" height="2"/><rect x="8" y="0" width="2" height="2"/></g></svg>
<div style="position:absolute;left:0px;top:0px;width:1445px;height:1px;background:#6fb3f2"></div>
<div style="position:absolute;left:0px;top:0px;width:1px;height:912px;background:#6fb3f2"></div>
<div style="position:absolute;left:1444px;top:0px;width:1px;height:912px;background:#6fb3f2"></div>
<div style="position:absolute;left:0px;top:911px;width:1445px;height:1px;background:#6fb3f2"></div>
<svg style="position:absolute;left:0;top:0" width="1445" height="160"><rect x="5" y="56" width="2" height="2" fill="#b4b4b4"/><rect x="5" y="56" width="1" height="1" fill="#7a7a7a"/><rect x="5" y="59.5" width="2" height="2" fill="#b4b4b4"/><rect x="5" y="59.5" width="1" height="1" fill="#7a7a7a"/><rect x="5" y="63.0" width="2" height="2" fill="#b4b4b4"/><rect x="5" y="63.0" width="1" height="1" fill="#7a7a7a"/><rect x="5" y="66.5" width="2" height="2" fill="#b4b4b4"/><rect x="5" y="66.5" width="1" height="1" fill="#7a7a7a"/><rect x="5" y="70.0" width="2" height="2" fill="#b4b4b4"/><rect x="5" y="70.0" width="1" height="1" fill="#7a7a7a"/><rect x="5" y="73.5" width="2" height="2" fill="#b4b4b4"/><rect x="5" y="73.5" width="1" height="1" fill="#7a7a7a"/><rect x="5" y="77.0" width="2" height="2" fill="#b4b4b4"/><rect x="5" y="77.0" width="1" height="1" fill="#7a7a7a"/><rect x="5" y="80.5" width="2" height="2" fill="#b4b4b4"/><rect x="5" y="80.5" width="1" height="1" fill="#7a7a7a"/></svg><svg style="position:absolute;left:14.3px;top:57.0px" width="24" height="24" viewBox="0 0 24 24"><defs><radialGradient id="gl"><stop offset="0" stop-color="#fff"/><stop offset=".45" stop-color="#fff35a"/><stop offset="1" stop-color="#fff35a" stop-opacity="0"/></radialGradient><linearGradient id="pg" x1="0" y1="0" x2="1" y2="1"><stop offset="0" stop-color="#e6e6e6"/><stop offset=".6" stop-color="#f6f6f6"/><stop offset="1" stop-color="#d6d6d6"/></linearGradient></defs><rect x="3" y="1.5" width="18" height="21" rx="1" fill="url(#pg)" stroke="#a0a0a0"/><circle cx="18" cy="5.5" r="5" fill="url(#gl)"/></svg><svg style="position:absolute;left:45.0px;top:57.0px" width="24" height="24" viewBox="0 0 24 24"><path d="M1.5 4.5h6l1 -2h10v14h-17z" fill="#8a8a8a" stroke="#6a6a6a"/><rect x="4" y="3" width="14" height="11" fill="#e8e8e8" stroke="#b0b0b0"/><path d="M4.5 10h19l-3.5 11.5H1z" fill="#5f92d8" stroke="#3a66a8"/></svg><svg style="position:absolute;left:76.0px;top:57.0px" width="24" height="24" viewBox="0 0 24 24"><path d="M3.5 12.5h17l1.5 4v5.5H2v-5.5z" fill="#d8d8d8" stroke="#6e6e6e" stroke-width=".9"/><rect x="2.5" y="17" width="19" height="4.5" fill="#a8a8a8"/><path d="M4 19h5" stroke="#777" stroke-width="1"/><path d="M4 8C5 2 12 0 16 5h3l-5 7-5-7h3c-2-2-6-1-8 3z" fill="#3d7ad0" stroke="#24508e" stroke-width=".8"/></svg><svg style="position:absolute;left:107.0px;top:57.0px" width="24" height="24" viewBox="0 0 24 24"><rect x="6" y="2" width="12" height="9" fill="#f4f4f4" stroke="#9a9a9a"/><path d="M12 3l3 3h-2v3h-2v-3H9z" fill="#7e7e7e"/><rect x="2" y="10" width="20" height="10" rx="2" fill="#dcdcdc" stroke="#8e8e8e"/><rect x="4" y="15" width="16" height="3" fill="#b8b8b8"/></svg><div style="position:absolute;left:137px;top:58px;width:1px;height:24px;background:#c5c5c5"></div><div style="position:absolute;left:138px;top:58px;width:1px;height:24px;background:#fafafa"></div><svg style="position:absolute;left:144.0px;top:57.0px" width="24" height="24" viewBox="0 0 24 24"><path d="M5 2l10 14M19 2L9 16" stroke="#a6a6a6" stroke-width="2.2"/><circle cx="6.5" cy="18.5" r="3.3" fill="none" stroke="#8e8e8e" stroke-width="2.2"/><circle cx="17.5" cy="18.5" r="3.3" fill="none" stroke="#8e8e8e" stroke-width="2.2"/></svg><svg style="position:absolute;left:174.5px;top:57.0px" width="24" height="24" viewBox="0 0 24 24"><rect x="2" y="1.5" width="13" height="15" fill="#f2f2f2" stroke="#c4c4c4"/><rect x="8" y="7.5" width="14" height="15" fill="#f6f6f6" stroke="#bcbcbc"/><rect x="10.5" y="11" width="9" height="6" fill="#dadada"/></svg><svg style="position:absolute;left:206.0px;top:57.0px" width="24" height="24" viewBox="0 0 24 24"><rect x="3" y="3" width="18" height="19.5" rx="1" fill="#bdbdbd" stroke="#9a9a9a"/><rect x="5.5" y="6" width="13" height="14" fill="#ececec"/><rect x="8" y="1" width="8" height="4" rx="1" fill="#a8a8a8" stroke="#8a8a8a"/></svg><div style="position:absolute;left:236px;top:58px;width:1px;height:24px;background:#c5c5c5"></div><div style="position:absolute;left:237px;top:58px;width:1px;height:24px;background:#fafafa"></div><svg style="position:absolute;left:244.0px;top:57.0px" width="24" height="24" viewBox="0 0 24 24"><path d="M3 9l7-7v4c6 0 10 3 10 9 0 3-2 6-4 7 1-2 1-6-2-7-1-.5-3-.5-4-.5v4z" fill="#f3d82a" stroke="#d8b400" stroke-width=".8"/><ellipse cx="12" cy="21" rx="7" ry="1.5" fill="#000" opacity=".08"/></svg><svg style="position:absolute;left:272.8px;top:66.5px" width="8" height="5" viewBox="0 0 8 5"><path d="M0 0h8l-4 4.5z" fill="#000"/></svg><svg style="position:absolute;left:286.5px;top:57.0px" width="24" height="24" viewBox="0 0 24 24"><path d="M21 9l-7-7v4C8 6 4 9 4 15c0 3 2 6 4 7-1-2-1-6 2-7 1-.5 3-.5 4-.5v4z" fill="#d4d4d4" stroke="#bdbdbd" stroke-width=".8"/></svg><svg style="position:absolute;left:315.6px;top:66.5px" width="8" height="5" viewBox="0 0 8 5"><path d="M0 0h8l-4 4.5z" fill="#7a7a7a"/></svg><div style="position:absolute;left:328px;top:58px;width:1px;height:24px;background:#c5c5c5"></div><div style="position:absolute;left:329px;top:58px;width:1px;height:24px;background:#fafafa"></div><svg style="position:absolute;left:335.0px;top:57.0px" width="24" height="24" viewBox="0 0 24 24"><path d="M3.5 11A8.5 8.5 0 0 1 18 5l2-2.5V10h-7l2.5-2.5A5.5 5.5 0 0 0 7 11z" fill="#3d7ed2" stroke="#1f4f96" stroke-width=".8"/><path d="M20.5 13A8.5 8.5 0 0 1 6 19l-2 2.5V14h7l-2.5 2.5A5.5 5.5 0 0 0 17 13z" fill="#3d7ed2" stroke="#1f4f96" stroke-width=".8"/></svg><div style="position:absolute;left:365px;top:58px;width:1px;height:24px;background:#c5c5c5"></div><div style="position:absolute;left:366px;top:58px;width:1px;height:24px;background:#fafafa"></div><svg style="position:absolute;left:371.5px;top:57.0px" width="24" height="24" viewBox="0 0 24 24"><path d="M2 2l14 6-5.5 2.5 7 8-3 3-7-8L5 19z" fill="#666" stroke="#3a3a3a" stroke-width=".9"/><path d="M15 6.5c0-3 2-4.5 4-4.5s3.5 1.5 3.5 3.5c0 2.5-3 3-3 5.5v1.5" fill="none" stroke="#2d6fc8" stroke-width="2.2"/><circle cx="19.5" cy="15.5" r="1.4" fill="#2d6fc8"/></svg><div style="position:absolute;left:401px;top:53px;width:1px;height:32px;background:#a9a9a9"></div><div style="position:absolute;left:402px;top:53px;width:1px;height:32px;background:#fdfdfd"></div><svg style="position:absolute;left:0;top:0" width="1445" height="160"><rect x="406" y="56" width="2" height="2" fill="#b4b4b4"/><rect x="406" y="56" width="1" height="1" fill="#7a7a7a"/><rect x="406" y="59.5" width="2" height="2" fill="#b4b4b4"/><rect x="406" y="59.5" width="1" height="1" fill="#7a7a7a"/><rect x="406" y="63.0" width="2" height="2" fill="#b4b4b4"/><rect x="406" y="63.0" width="1" height="1" fill="#7a7a7a"/><rect x="406" y="66.5" width="2" height="2" fill="#b4b4b4"/><rect x="406" y="66.5" width="1" height="1" fill="#7a7a7a"/><rect x="406" y="70.0" width="2" height="2" fill="#b4b4b4"/><rect x="406" y="70.0" width="1" height="1" fill="#7a7a7a"/><rect x="406" y="73.5" width="2" height="2" fill="#b4b4b4"/><rect x="406" y="73.5" width="1" height="1" fill="#7a7a7a"/><rect x="406" y="77.0" width="2" height="2" fill="#b4b4b4"/><rect x="406" y="77.0" width="1" height="1" fill="#7a7a7a"/><rect x="406" y="80.5" width="2" height="2" fill="#b4b4b4"/><rect x="406" y="80.5" width="1" height="1" fill="#7a7a7a"/></svg><div style="position:absolute;left:412px;top:58px;width:145px;height:22px;background:#e5e5e5;border:1px solid #adadad;box-sizing:border-box"></div><svg style="position:absolute;left:416.0px;top:60.0px" width="18" height="18" viewBox="0 0 18 18"><path d="M4 6l6-3 6 3v8l-6 3-6-3z" fill="#3f79c6" stroke="#1c3f78" stroke-width=".8"/><path d="M4 6l6 3 6-3M10 9v8" stroke="#1c3f78" stroke-width=".8" fill="none"/><path d="M2 2l5 5 2-1-5-5z" fill="#f2dc3a" stroke="#444" stroke-width=".6"/></svg><div class="t" style="left:434.6px;top:63.49px;font-size:11px">Part Design</div><svg style="position:absolute;left:543.2px;top:66.5px" width="8" height="5" viewBox="0 0 8 5"><path d="M0 0h8l-4 4.5z" fill="#000"/></svg><div style="position:absolute;left:558px;top:53px;width:1px;height:32px;background:#a9a9a9"></div><div style="position:absolute;left:559px;top:53px;width:1px;height:32px;background:#fdfdfd"></div><svg style="position:absolute;left:0;top:0" width="1445" height="160"><rect x="563" y="56" width="2" height="2" fill="#b4b4b4"/><rect x="563" y="56" width="1" height="1" fill="#7a7a7a"/><rect x="563" y="59.5" width="2" height="2" fill="#b4b4b4"/><rect x="563" y="59.5" width="1" height="1" fill="#7a7a7a"/><rect x="563" y="63.0" width="2" height="2" fill="#b4b4b4"/><rect x="563" y="63.0" width="1" height="1" fill="#7a7a7a"/><rect x="563" y="66.5" width="2" height="2" fill="#b4b4b4"/><rect x="563" y="66.5" width="1" height="1" fill="#7a7a7a"/><rect x="563" y="70.0" width="2" height="2" fill="#b4b4b4"/><rect x="563" y="70.0" width="1" height="1" fill="#7a7a7a"/><rect x="563" y="73.5" width="2" height="2" fill="#b4b4b4"/><rect x="563" y="73.5" width="1" height="1" fill="#7a7a7a"/><rect x="563" y="77.0" width="2" height="2" fill="#b4b4b4"/><rect x="563" y="77.0" width="1" height="1" fill="#7a7a7a"/><rect x="563" y="80.5" width="2" height="2" fill="#b4b4b4"/><rect x="563" y="80.5" width="1" height="1" fill="#7a7a7a"/></svg><svg style="position:absolute;left:572.0px;top:57.0px" width="24" height="24" viewBox="0 0 24 24"><defs><radialGradient id="rc" cx=".4" cy=".35" r=".7"><stop offset="0" stop-color="#ff4a4a"/><stop offset="1" stop-color="#b00c0c"/></radialGradient></defs><circle cx="11.7" cy="11.3" r="11" fill="url(#rc)" stroke="#6e0606" stroke-width=".9"/></svg><svg style="position:absolute;left:603.0px;top:57.0px" width="24" height="24" viewBox="0 0 24 24"><rect x="0.5" y="0.5" width="23" height="22.5" rx="1.5" fill="#b9b9b9" stroke="#a0a0a0"/></svg><svg style="position:absolute;left:634.0px;top:57.0px" width="24" height="24" viewBox="0 0 24 24"><rect x="1.5" y="3" width="19" height="19" rx="1" fill="#f6f6f6" stroke="#9a9a9a"/><path d="M2 3h18v3H2z" fill="#e2c86a"/><path d="M5 10h12M5 13h12M5 16h8" stroke="#b0b0b0"/><path d="M9 19l11-9 2.5 2.5-11 9-3.5 .8z" fill="#f0b030" stroke="#8a5a10" stroke-width=".7"/><path d="M20 10l2.5 2.5 1-1-2.5-2.5z" fill="#e33"/></svg><svg style="position:absolute;left:665.0px;top:57.0px" width="24" height="24" viewBox="0 0 24 24"><path d="M1 1l22 11L1 23z" fill="#bdbdbd" stroke="#9c9c9c"/></svg><svg style="position:absolute;left:0;top:0" width="1445" height="160"><rect x="5" y="90" width="2" height="2" fill="#b4b4b4"/><rect x="5" y="90" width="1" height="1" fill="#7a7a7a"/><rect x="5" y="93.5" width="2" height="2" fill="#b4b4b4"/><rect x="5" y="93.5" width="1" height="1" fill="#7a7a7a"/><rect x="5" y="97.0" width="2" height="2" fill="#b4b4b4"/><rect x="5" y="97.0" width="1" height="1" fill="#7a7a7a"/><rect x="5" y="100.5" width="2" height="2" fill="#b4b4b4"/><rect x="5" y="100.5" width="1" height="1" fill="#7a7a7a"/><rect x="5" y="104.0" width="2" height="2" fill="#b4b4b4"/><rect x="5" y="104.0" width="1" height="1" fill="#7a7a7a"/><rect x="5" y="107.5" width="2" height="2" fill="#b4b4b4"/><rect x="5" y="107.5" width="1" height="1" fill="#7a7a7a"/><rect x="5" y="111.0" width="2" height="2" fill="#b4b4b4"/><rect x="5" y="111.0" width="1" height="1" fill="#7a7a7a"/><rect x="5" y="114.5" width="2" height="2" fill="#b4b4b4"/><rect x="5" y="114.5" width="1" height="1" fill="#7a7a7a"/></svg><svg style="position:absolute;left:14.0px;top:91.0px" width="24" height="24" viewBox="0 0 24 24"><path d="M3 1.5h16v21H6l-3-3z" fill="#f2f2f2" stroke="#9a9a9a"/><path d="M3 19.5l3 3v-3z" fill="#555"/><circle cx="10" cy="9" r="5.5" fill="#2ccbd5" stroke="#0f5560" stroke-width="1.2"/><path d="M14 13l5 5" stroke="#0f5560" stroke-width="3.5"/><path d="M14 13l5 5" stroke="#2ccbd5" stroke-width="2"/></svg><svg style="position:absolute;left:45.0px;top:91.0px" width="24" height="24" viewBox="0 0 24 24"><circle cx="9" cy="9" r="7.5" fill="#2ccbd5" stroke="#0f5560" stroke-width="1.2"/><path d="M14.5 14.5l7 7" stroke="#0f5560" stroke-width="4"/><path d="M14.5 14.5l7 7" stroke="#2ccbd5" stroke-width="2.4"/><path d="M5 13l6-6M7.5 6.5h4v4" stroke="#fff" stroke-width="2" fill="none"/></svg><svg style="position:absolute;left:76.0px;top:91.0px" width="24" height="24" viewBox="0 0 24 24"><path d="M12 1l10 5.5v11L12 23 2 17.5v-11z" fill="#2ccbd5" stroke="#0f5560" stroke-width="1.2"/><circle cx="12" cy="12" r="7" fill="none" stroke="#d01818" stroke-width="2.6"/><path d="M7 7l10 10" stroke="#d01818" stroke-width="2.6"/></svg><svg style="position:absolute;left:105.5px;top:100.0px" width="8" height="5" viewBox="0 0 8 5"><path d="M0 0h8l-4 4.5z" fill="#000"/></svg><div style="position:absolute;left:118px;top:91px;width:1px;height:25px;background:#c5c5c5"></div><div style="position:absolute;left:119px;top:91px;width:1px;height:25px;background:#fafafa"></div><svg style="position:absolute;left:125.0px;top:91.0px" width="24" height="24" viewBox="0 0 24 24"><path d="M12 12.5v-8M12 12.5l-6 4M12 12.5l6 4" stroke="#1a1a1a" stroke-width="1.6" stroke-dasharray="0" opacity=".9"/><path d="M12 1.5l10 5.5v11L12 23.5 2 18V7z M12 12.5L2 7 M12 12.5L22 7 M12 12.5v11" stroke="#0f5560" stroke-width="2.3" fill="none" stroke-linejoin="round"/><path d="M12 1.5l10 5.5v11L12 23.5 2 18V7z M12 12.5L2 7 M12 12.5L22 7 M12 12.5v11" stroke="#2ccbd5" stroke-width="1.0" fill="none" stroke-linejoin="round"/></svg><div style="position:absolute;left:155px;top:91px;width:1px;height:25px;background:#c5c5c5"></div><div style="position:absolute;left:156px;top:91px;width:1px;height:25px;background:#fafafa"></div><svg style="position:absolute;left:162.0px;top:91.0px" width="24" height="24" viewBox="0 0 24 24"><path d="M1.5 8h15v14.5h-15z" fill="#2ccbd5"/><path d="M1.5 8h15v14.5h-15z M8 2.5h14.5v14.5 M16.5 8l6-5.5 M16.5 22.5l6-5.5 M1.5 8L8 2.5 M8 2.5V8" stroke="#0f5560" stroke-width="2.3" fill="none" stroke-linejoin="round"/><path d="M1.5 8h15v14.5h-15z M8 2.5h14.5v14.5 M16.5 8l6-5.5 M16.5 22.5l6-5.5 M1.5 8L8 2.5 M8 2.5V8" stroke="#2ccbd5" stroke-width="1.0" fill="none" stroke-linejoin="round"/></svg><svg style="position:absolute;left:193.0px;top:91.0px" width="24" height="24" viewBox="0 0 24 24"><path d="M1.5 8L8 2.5h14.5l-6 5.5z" fill="#2ccbd5"/><path d="M12 14v-4M12 14l-4 3M12 14l4 2" stroke="#1a1a1a" stroke-width="1.5"/><path d="M1.5 8h15v14.5h-15z M8 2.5h14.5v14.5 M16.5 8l6-5.5 M16.5 22.5l6-5.5 M1.5 8L8 2.5 M8 2.5V8" stroke="#0f5560" stroke-width="2.3" fill="none" stroke-linejoin="round"/><path d="M1.5 8h15v14.5h-15z M8 2.5h14.5v14.5 M16.5 8l6-5.5 M16.5 22.5l6-5.5 M1.5 8L8 2.5 M8 2.5V8" stroke="#2ccbd5" stroke-width="1.0" fill="none" stroke-linejoin="round"/></svg><svg style="position:absolute;left:224.0px;top:91.0px" width="24" height="24" viewBox="0 0 24 24"><path d="M16.5 8l6-5.5V17l-6 5.5z" fill="#2ccbd5"/><path d="M12 14v-4M12 14l-4 3M12 14l4 2" stroke="#1a1a1a" stroke-width="1.5"/><path d="M1.5 8h15v14.5h-15z M8 2.5h14.5v14.5 M16.5 8l6-5.5 M16.5 22.5l6-5.5 M1.5 8L8 2.5 M8 2.5V8" stroke="#0f5560" stroke-width="2.3" fill="none" stroke-linejoin="round"/><path d="M1.5 8h15v14.5h-15z M8 2.5h14.5v14.5 M16.5 8l6-5.5 M16.5 22.5l6-5.5 M1.5 8L8 2.5 M8 2.5V8" stroke="#2ccbd5" stroke-width="1.0" fill="none" stroke-linejoin="round"/></svg><div style="position:absolute;left:254px;top:91px;width:1px;height:25px;background:#c5c5c5"></div><div style="position:absolute;left:255px;top:91px;width:1px;height:25px;background:#fafafa"></div><svg style="position:absolute;left:261.5px;top:91.0px" width="24" height="24" viewBox="0 0 24 24"><path d="M8 2.5h14.5V17H8z" fill="#2ccbd5"/><path d="M12 14v-4M12 14l-4 3M12 14l4 2" stroke="#1a1a1a" stroke-width="1.5"/><path d="M1.5 8h15v14.5h-15z M8 2.5h14.5v14.5 M16.5 8l6-5.5 M16.5 22.5l6-5.5 M1.5 8L8 2.5 M8 2.5V8" stroke="#0f5560" stroke-width="2.3" fill="none" stroke-linejoin="round"/><path d="M1.5 8h15v14.5h-15z M8 2.5h14.5v14.5 M16.5 8l6-5.5 M16.5 22.5l6-5.5 M1.5 8L8 2.5 M8 2.5V8" stroke="#2ccbd5" stroke-width="1.0" fill="none" stroke-linejoin="round"/></svg><svg style="position:absolute;left:292.5px;top:91.0px" width="24" height="24" viewBox="0 0 24 24"><path d="M1.5 22.5L8 17h14.5l-6 5.5z" fill="#2ccbd5"/><path d="M12 14v-4M12 14l-4 3M12 14l4 2" stroke="#1a1a1a" stroke-width="1.5"/><path d="M1.5 8h15v14.5h-15z M8 2.5h14.5v14.5 M16.5 8l6-5.5 M16.5 22.5l6-5.5 M1.5 8L8 2.5 M8 2.5V8" stroke="#0f5560" stroke-width="2.3" fill="none" stroke-linejoin="round"/><path d="M1.5 8h15v14.5h-15z M8 2.5h14.5v14.5 M16.5 8l6-5.5 M16.5 22.5l6-5.5 M1.5 8L8 2.5 M8 2.5V8" stroke="#2ccbd5" stroke-width="1.0" fill="none" stroke-linejoin="round"/></svg><svg style="position:absolute;left:323.5px;top:91.0px" width="24" height="24" viewBox="0 0 24 24"><path d="M1.5 8L8 2.5V17l-6.5 5.5z" fill="#2ccbd5"/><path d="M12 14v-4M12 14l-4 3M12 14l4 2" stroke="#1a1a1a" stroke-width="1.5"/><path d="M1.5 8h15v14.5h-15z M8 2.5h14.5v14.5 M16.5 8l6-5.5 M16.5 22.5l6-5.5 M1.5 8L8 2.5 M8 2.5V8" stroke="#0f5560" stroke-width="2.3" fill="none" stroke-linejoin="round"/><path d="M1.5 8h15v14.5h-15z M8 2.5h14.5v14.5 M16.5 8l6-5.5 M16.5 22.5l6-5.5 M1.5 8L8 2.5 M8 2.5V8" stroke="#2ccbd5" stroke-width="1.0" fill="none" stroke-linejoin="round"/></svg><div style="position:absolute;left:353px;top:91px;width:1px;height:25px;background:#c5c5c5"></div><div style="position:absolute;left:354px;top:91px;width:1px;height:25px;background:#fafafa"></div><svg style="position:absolute;left:358.5px;top:91.0px" width="24" height="24" viewBox="0 0 24 24"><path d="M3 6l4-4 16 15-3 5z" fill="#2ccbd5" stroke="#0f5560" stroke-width="1"/><path d="M8 6l2-1M11 9l2-1M14 11l2-1M17 14l2-1" stroke="#0f5560" stroke-width="1"/></svg><div style="position:absolute;left:389px;top:87px;width:1px;height:32px;background:#a9a9a9"></div><div style="position:absolute;left:390px;top:87px;width:1px;height:32px;background:#fdfdfd"></div><svg style="position:absolute;left:0;top:0" width="1445" height="160"><rect x="394" y="90" width="2" height="2" fill="#b4b4b4"/><rect x="394" y="90" width="1" height="1" fill="#7a7a7a"/><rect x="394" y="93.5" width="2" height="2" fill="#b4b4b4"/><rect x="394" y="93.5" width="1" height="1" fill="#7a7a7a"/><rect x="394" y="97.0" width="2" height="2" fill="#b4b4b4"/><rect x="394" y="97.0" width="1" height="1" fill="#7a7a7a"/><rect x="394" y="100.5" width="2" height="2" fill="#b4b4b4"/><rect x="394" y="100.5" width="1" height="1" fill="#7a7a7a"/><rect x="394" y="104.0" width="2" height="2" fill="#b4b4b4"/><rect x="394" y="104.0" width="1" height="1" fill="#7a7a7a"/><rect x="394" y="107.5" width="2" height="2" fill="#b4b4b4"/><rect x="394" y="107.5" width="1" height="1" fill="#7a7a7a"/><rect x="394" y="111.0" width="2" height="2" fill="#b4b4b4"/><rect x="394" y="111.0" width="1" height="1" fill="#7a7a7a"/><rect x="394" y="114.5" width="2" height="2" fill="#b4b4b4"/><rect x="394" y="114.5" width="1" height="1" fill="#7a7a7a"/></svg><svg style="position:absolute;left:403.0px;top:91.0px" width="24" height="24" viewBox="0 0 24 24"><path d="M3 8l6-3 5 2.5v6l5-2.5 3 1.5v6l-9 4.5-10-5z" fill="#f5e03c" stroke="#3a3510" stroke-width="1"/><path d="M3 8l5 2.5v6M14 13.5l-5 2.5 4 2 9-4.5M13 18v4.5" fill="none" stroke="#3a3510" stroke-width="1"/><path d="M3 8l6-3 5 2.5-6 3z" fill="#fff07a"/></svg><svg style="position:absolute;left:434.0px;top:91.0px" width="24" height="24" viewBox="0 0 24 24"><path d="M1.5 4h7l2 2h11v15h-20z" fill="#8a8a8a"/><path d="M1.5 8h20v13h-20z" fill="#5f92d8" stroke="#3a66a8"/></svg><svg style="position:absolute;left:0;top:0" width="1445" height="160"><rect x="5" y="124" width="2" height="2" fill="#b4b4b4"/><rect x="5" y="124" width="1" height="1" fill="#7a7a7a"/><rect x="5" y="127.5" width="2" height="2" fill="#b4b4b4"/><rect x="5" y="127.5" width="1" height="1" fill="#7a7a7a"/><rect x="5" y="131.0" width="2" height="2" fill="#b4b4b4"/><rect x="5" y="131.0" width="1" height="1" fill="#7a7a7a"/><rect x="5" y="134.5" width="2" height="2" fill="#b4b4b4"/><rect x="5" y="134.5" width="1" height="1" fill="#7a7a7a"/><rect x="5" y="138.0" width="2" height="2" fill="#b4b4b4"/><rect x="5" y="138.0" width="1" height="1" fill="#7a7a7a"/><rect x="5" y="141.5" width="2" height="2" fill="#b4b4b4"/><rect x="5" y="141.5" width="1" height="1" fill="#7a7a7a"/><rect x="5" y="145.0" width="2" height="2" fill="#b4b4b4"/><rect x="5" y="145.0" width="1" height="1" fill="#7a7a7a"/><rect x="5" y="148.5" width="2" height="2" fill="#b4b4b4"/><rect x="5" y="148.5" width="1" height="1" fill="#7a7a7a"/></svg><svg style="position:absolute;left:14.0px;top:125.0px" width="24" height="24" viewBox="0 0 24 24"><path d="M3 17l9-4.5 9 4.5-9 4.5z" fill="none" stroke="#555" stroke-width="1.1"/><path d="M5 17l7-3.5 7 3.5-7 3.5z" fill="none" stroke="#888" stroke-width="1"/><path d="M2.5 6L12 1.5 21.5 6v5L12 15.5 2.5 11z" fill="#f5e03c" stroke="#3a3510" stroke-width="1"/><path d="M2.5 6L12 10.5 21.5 6M12 10.5v5" fill="none" stroke="#3a3510"/><path d="M12 10.5l9.5-4.5v5L12 15.5z" fill="#c9a800" opacity=".7"/></svg><svg style="position:absolute;left:45.0px;top:125.0px" width="24" height="24" viewBox="0 0 24 24"><path d="M2 20L23 4" stroke="#e8232a" stroke-width="2.2"/><path d="M1 8c4-3 9-5 14-5 4 2 7 7 6 12l-8 6C14 15 10 11 3 11z" fill="#f5e03c" stroke="#3a3510" stroke-width="1"/><path d="M3 11c5 1 9 4 10 10" fill="none" stroke="#3a3510"/></svg><svg style="position:absolute;left:76.0px;top:125.0px" width="24" height="24" viewBox="0 0 24 24"><path d="M3 10l10-7 9 2v17l-9-3-10-1z" fill="#f5e03c" stroke="#3a3510" stroke-width="1"/><rect x="2" y="10" width="8" height="9" fill="none" stroke="#e8232a" stroke-width="2.2"/><path d="M13 3l9 2v17l-9-2" fill="none" stroke="#e8232a" stroke-width="2.2"/></svg><svg style="position:absolute;left:107.0px;top:125.0px" width="24" height="24" viewBox="0 0 24 24"><path d="M4 12l6-9 10 4-4 12-10 3z" fill="#f5e03c" stroke="#3a3510" stroke-width="1"/><rect x="2" y="13" width="7" height="7" fill="none" stroke="#e8232a" stroke-width="2"/><path d="M10 3l10 4-4 12" fill="none" stroke="#e8232a" stroke-width="2"/><circle cx="22" cy="2.5" r="1.5" fill="#e8232a"/></svg><svg style="position:absolute;left:138.0px;top:125.0px" width="24" height="24" viewBox="0 0 24 24"><path d="M3 6l8-4 10 3v13l-8 4-10-3z" fill="#f5e03c" stroke="#3a3510" stroke-width="1"/><path d="M3 6l10 3 8-4M13 9v13" fill="none" stroke="#3a3510"/><path d="M13 9v12M13 21l-9-3M13 21l8-3" stroke="#e8232a" stroke-width="1.6"/><circle cx="13" cy="9" r="2" fill="#e8232a"/><circle cx="13" cy="21" r="2" fill="#e8232a"/><circle cx="3.5" cy="18" r="2" fill="#e8232a"/><circle cx="21" cy="18" r="2" fill="#e8232a"/></svg><svg style="position:absolute;left:167.5px;top:134.0px" width="8" height="5" viewBox="0 0 8 5"><path d="M0 0h8l-4 4.5z" fill="#000"/></svg><div style="position:absolute;left:180px;top:125px;width:1px;height:25px;background:#c5c5c5"></div><div style="position:absolute;left:181px;top:125px;width:1px;height:25px;background:#fafafa"></div><svg style="position:absolute;left:187.0px;top:125.0px" width="24" height="24" viewBox="0 0 24 24"><path d="M2 11l10-6 10 5v7l-10 6-10-5z" fill="#5c92d6" stroke="#16325e" stroke-width="1"/><path d="M2 11l10 5 10-6M12 16v7" fill="none" stroke="#16325e" stroke-width="1"/><path d="M7 10.5l5-2.5 5 2.5-5 2.5z" fill="#e8232a" stroke="#a81016" stroke-width=".8"/></svg><svg style="position:absolute;left:218.0px;top:125.0px" width="24" height="24" viewBox="0 0 24 24"><path d="M2 2l13 1 7 3v17l-7-2-13-1z" fill="#5c92d6" stroke="#16325e" stroke-width="1"/><path d="M15 3v18" stroke="#16325e"/><path d="M15 3l7 3v17l-7-2z" fill="#2d5a9c"/><ellipse cx="9" cy="12" rx="5" ry="6.5" fill="#e8232a" stroke="#a81016"/><ellipse cx="11" cy="12.5" rx="1.5" ry="4" fill="#fff"/></svg><svg style="position:absolute;left:249.0px;top:125.0px" width="24" height="24" viewBox="0 0 24 24"><path d="M2 22L23 5" stroke="#e8232a" stroke-width="2.2"/><path d="M2 10c4-3 8-4 12-4l6 9c-2 4-5 6-8 7C11 16 8 13 3 12z" fill="#5c92d6" stroke="#16325e" stroke-width="1"/><path d="M10 5c3-2 7-2 9 0l3 6-5 3z" fill="#e8232a" stroke="#a81016" stroke-width=".8"/></svg><svg style="position:absolute;left:280.0px;top:125.0px" width="24" height="24" viewBox="0 0 24 24"><path d="M3 10l10-7 9 2v17l-9-3-10-1z" fill="#e8232a" stroke="#a81016" stroke-width="1"/><rect x="2" y="10" width="8" height="9" fill="none" stroke="#5c92d6" stroke-width="2.2"/><path d="M13 3l9 2v17l-9-2" fill="none" stroke="#5c92d6" stroke-width="2.2"/></svg><svg style="position:absolute;left:311.0px;top:125.0px" width="24" height="24" viewBox="0 0 24 24"><path d="M4 12l6-9 10 4-4 12-10 3z" fill="#e8232a" stroke="#a81016" stroke-width="1"/><rect x="2" y="13" width="7" height="7" fill="none" stroke="#5c92d6" stroke-width="2"/><path d="M10 3l10 4-4 12" fill="none" stroke="#5c92d6" stroke-width="2"/><circle cx="22" cy="2.5" r="1.5" fill="#5c92d6"/></svg><svg style="position:absolute;left:342.0px;top:125.0px" width="24" height="24" viewBox="0 0 24 24"><path d="M3 6l8-4 10 3v13l-8 4-10-3z" fill="#e8232a" stroke="#400" stroke-width="1"/><path d="M3 6l10 3 8-4M13 9v13" fill="none" stroke="#400"/><path d="M13 9v12M13 21l-9-3M13 21l8-3" stroke="#5c92d6" stroke-width="1.6"/><circle cx="13" cy="9" r="2" fill="#5c92d6"/><circle cx="13" cy="21" r="2" fill="#5c92d6"/><circle cx="3.5" cy="18" r="2" fill="#5c92d6"/><circle cx="21" cy="18" r="2" fill="#5c92d6"/></svg><svg style="position:absolute;left:371.8px;top:134.0px" width="8" height="5" viewBox="0 0 8 5"><path d="M0 0h8l-4 4.5z" fill="#000"/></svg><div style="position:absolute;left:384px;top:125px;width:1px;height:25px;background:#c5c5c5"></div><div style="position:absolute;left:385px;top:125px;width:1px;height:25px;background:#fafafa"></div><svg style="position:absolute;left:391.5px;top:125.0px" width="24" height="24" viewBox="0 0 24 24"><path d="M1 14l9-5 13 4v8l-9 3-13-4z" fill="#5c92d6" stroke="#16325e" stroke-width="1"/><path d="M1 14l13 4 9-5M14 18v6" fill="none" stroke="#16325e"/><path d="M3 5l5-3 4 2v10l-5 3-4-2z" fill="#5c92d6" stroke="#16325e" stroke-width="1"/><ellipse cx="17" cy="13" rx="5" ry="2.5" fill="#f5e03c" stroke="#3a3510" stroke-width=".8"/><path d="M12 13v6c0 1.5 10 1.5 10 0v-6" fill="#f5e03c" stroke="#3a3510" stroke-width=".8"/><path d="M2 22l4-2M9 19l3-1.5" stroke="#e8232a" stroke-width="1.6"/></svg><svg style="position:absolute;left:422.0px;top:125.0px" width="24" height="24" viewBox="0 0 24 24"><path d="M1 14l9-5 13 4v8l-9 3-13-4z" fill="#5c92d6" stroke="#16325e" stroke-width="1"/><path d="M1 14l13 4 9-5M14 18v6" fill="none" stroke="#16325e"/><path d="M3 14l3-1.5 3 1.5-3 1.5z" fill="#16325e"/><rect x="9" y="11" width="5" height="5" fill="#f5e03c" stroke="#3a3510" stroke-width=".8"/><rect x="15" y="9" width="5" height="5" fill="#f5e03c" stroke="#3a3510" stroke-width=".8"/></svg><svg style="position:absolute;left:453.0px;top:125.0px" width="24" height="24" viewBox="0 0 24 24"><path d="M1 14l9-5 13 4v8l-9 3-13-4z" fill="#5c92d6" stroke="#16325e" stroke-width="1"/><path d="M1 14l13 4 9-5M14 18v6" fill="none" stroke="#16325e"/><circle cx="8" cy="9" r="2.5" fill="#f5e03c" stroke="#3a3510" stroke-width=".7"/><circle cx="14" cy="7" r="2.5" fill="#f5e03c" stroke="#3a3510" stroke-width=".7"/><circle cx="19" cy="10" r="2.5" fill="#f5e03c" stroke="#3a3510" stroke-width=".7"/><circle cx="17" cy="15" r="2.5" fill="#f5e03c" stroke="#3a3510" stroke-width=".7"/><circle cx="10" cy="15" r="2.5" fill="#f5e03c" stroke="#3a3510" stroke-width=".7"/></svg><svg style="position:absolute;left:484.3px;top:125.0px" width="24" height="24" viewBox="0 0 24 24"><path d="M1 14l9-5 13 4v8l-9 3-13-4z" fill="#5c92d6" stroke="#16325e" stroke-width="1"/><path d="M1 14l13 4 9-5M14 18v6" fill="none" stroke="#16325e"/><rect x="5" y="6" width="6" height="6" fill="#f5e03c" stroke="#3a3510" stroke-width=".8"/><rect x="12" y="2" width="9" height="9" fill="#f5e03c" stroke="#3a3510" stroke-width=".8"/><rect x="14" y="12" width="7" height="7" fill="#f5e03c" stroke="#3a3510" stroke-width=".8"/><rect x="6" y="14" width="5" height="5" fill="#2d5a9c" stroke="#16325e" stroke-width=".8"/></svg><div style="position:absolute;left:514.5px;top:125px;width:1px;height:25px;background:#c5c5c5"></div><div style="position:absolute;left:515.5px;top:125px;width:1px;height:25px;background:#fafafa"></div><svg style="position:absolute;left:520.8px;top:125.0px" width="24" height="24" viewBox="0 0 24 24"><path d="M2 12c0-5 5-8 11-8l9 4v8l-10 6-10-5z" fill="#5c92d6" stroke="#16325e" stroke-width="1"/><path d="M2 12c0-5 5-8 11-8l9 4-10 5c0-3-4-5-10-1z" fill="#e8232a" stroke="#a81016" stroke-width=".8"/><path d="M2 12l10 5v5" fill="none" stroke="#16325e"/></svg><svg style="position:absolute;left:552.0px;top:125.0px" width="24" height="24" viewBox="0 0 24 24"><path d="M2 14l5-6 8-4 7 4v8l-10 6-10-5z" fill="#5c92d6" stroke="#16325e" stroke-width="1"/><path d="M2 14l5-6 8-4 7 4-10 5z" fill="#e8232a" stroke="#a81016" stroke-width=".8"/><path d="M2 14l10 4v4" fill="none" stroke="#16325e"/></svg><svg style="position:absolute;left:582.5px;top:125.0px" width="24" height="24" viewBox="0 0 24 24"><path d="M12 2l10 4v12l-10 5-10-5V6z" fill="#5c92d6" stroke="#16325e" stroke-width="1"/><path d="M5 8l7 3v9l-7-3z" fill="#e8232a"/><path d="M12 11l7-3v9l-7 3z" fill="#a81016"/><path d="M2 6l10 5 10-5M12 11v12" fill="none" stroke="#16325e"/></svg><svg style="position:absolute;left:613.8px;top:125.0px" width="24" height="24" viewBox="0 0 24 24"><path d="M3 5l10-3 9 4v14l-10 3-10-4z" fill="#5c92d6" stroke="#16325e" stroke-width="1"/><path d="M6 7l7-2v13l-7 2z" fill="#e8232a" stroke="#a81016" stroke-width=".8"/><path d="M13 5l6 2v12l-6-1z" fill="#c01818"/></svg><div style="position:absolute;left:644px;top:125px;width:1px;height:25px;background:#c5c5c5"></div><div style="position:absolute;left:645px;top:125px;width:1px;height:25px;background:#fafafa"></div><svg style="position:absolute;left:650.4px;top:125.0px" width="24" height="24" viewBox="0 0 24 24"><circle cx="9" cy="14" r="7.5" fill="#5c92d6" stroke="#16325e" stroke-width="1"/><circle cx="15" cy="10" r="7.5" fill="#5c92d6" stroke="#16325e" stroke-width="1" opacity=".92"/></svg><div style="position:absolute;left:680px;top:121px;width:1px;height:32px;background:#a9a9a9"></div><div style="position:absolute;left:681px;top:121px;width:1px;height:32px;background:#fdfdfd"></div><svg style="position:absolute;left:0;top:0" width="1445" height="160"><rect x="685" y="124" width="2" height="2" fill="#b4b4b4"/><rect x="685" y="124" width="1" height="1" fill="#7a7a7a"/><rect x="685" y="127.5" width="2" height="2" fill="#b4b4b4"/><rect x="685" y="127.5" width="1" height="1" fill="#7a7a7a"/><rect x="685" y="131.0" width="2" height="2" fill="#b4b4b4"/><rect x="685" y="131.0" width="1" height="1" fill="#7a7a7a"/><rect x="685" y="134.5" width="2" height="2" fill="#b4b4b4"/><rect x="685" y="134.5" width="1" height="1" fill="#7a7a7a"/><rect x="685" y="138.0" width="2" height="2" fill="#b4b4b4"/><rect x="685" y="138.0" width="1" height="1" fill="#7a7a7a"/><rect x="685" y="141.5" width="2" height="2" fill="#b4b4b4"/><rect x="685" y="141.5" width="1" height="1" fill="#7a7a7a"/><rect x="685" y="145.0" width="2" height="2" fill="#b4b4b4"/><rect x="685" y="145.0" width="1" height="1" fill="#7a7a7a"/><rect x="685" y="148.5" width="2" height="2" fill="#b4b4b4"/><rect x="685" y="148.5" width="1" height="1" fill="#7a7a7a"/></svg><svg style="position:absolute;left:694.0px;top:125.0px" width="24" height="24" viewBox="0 0 24 24"><path d="M3 8l5-3 5 2v5l4-2 4 2v7l-9 5-9-5z" fill="#5c92d6" stroke="#16325e" stroke-width="1"/><path d="M3 8l5 2.5 5-2.5M8 10.5v6.5l4 2 9-5M12 19v5" fill="none" stroke="#16325e"/></svg><svg style="position:absolute;left:725.0px;top:125.0px" width="24" height="24" viewBox="0 0 24 24"><path d="M2 1.5h17l3 3v18H2z" fill="#fafafa" stroke="#888"/><rect x="4.5" y="10" width="9" height="9" fill="none" stroke="#d42020" stroke-width="1.6"/><circle cx="14" cy="9" r="5" fill="none" stroke="#d42020" stroke-width="1.6"/></svg><svg style="position:absolute;left:756.0px;top:125.0px" width="24" height="24" viewBox="0 0 24 24"><path d="M10 1h4v7h4l-6 6-6-6h4z" fill="#9a9a9a" stroke="#7a7a7a" stroke-width=".6"/><path d="M2 12h4v7h12v-7h4v10H2z" fill="#f2f2f2" stroke="#a6a6a6"/></svg><svg style="position:absolute;left:787.0px;top:125.0px" width="24" height="24" viewBox="0 0 24 24"><path d="M2 5l8-3v19l-8 2z" fill="#f6f6f6" stroke="#999"/><path d="M10 4l6-3 7 3v16l-6 3-7-3z" fill="#5c92d6" stroke="#16325e" stroke-width="1"/><rect x="3.5" y="12" width="5" height="6" fill="none" stroke="#d42020" stroke-width="1.2"/><circle cx="7" cy="11" r="3" fill="none" stroke="#d42020" stroke-width="1.2"/></svg><div style="position:absolute;left:817px;top:125px;width:1px;height:25px;background:#c5c5c5"></div><div style="position:absolute;left:818px;top:125px;width:1px;height:25px;background:#fafafa"></div><svg style="position:absolute;left:824.0px;top:125.0px" width="24" height="24" viewBox="0 0 24 24"><circle cx="12" cy="12" r="2.6" fill="#d42020" stroke="#5c92d6" stroke-width="1.4"/></svg><svg style="position:absolute;left:854.5px;top:125.0px" width="24" height="24" viewBox="0 0 24 24"><path d="M3 22L21 3" stroke="#16325e" stroke-width="3"/><path d="M3 22L21 3" stroke="#5c92d6" stroke-width="1.6"/><circle cx="3" cy="21.5" r="2" fill="#d42020"/><circle cx="21" cy="3" r="2" fill="#d42020"/></svg><svg style="position:absolute;left:886.0px;top:125.0px" width="24" height="24" viewBox="0 0 24 24"><path d="M12 3l9 9-9 9-9-9z" fill="none" stroke="#16325e" stroke-width="3"/><path d="M12 3l9 9-9 9-9-9z" fill="none" stroke="#5c92d6" stroke-width="1.6"/><circle cx="12" cy="3" r="2" fill="#d42020"/><circle cx="21" cy="12" r="2" fill="#d42020"/><circle cx="12" cy="21" r="2" fill="#d42020"/><circle cx="3" cy="12" r="2" fill="#d42020"/></svg><svg style="position:absolute;left:917.0px;top:125.0px" width="24" height="24" viewBox="0 0 24 24"><defs><radialGradient id="sb" cx=".5" cy=".6" r=".6"><stop offset="0" stop-color="#2c5aa0"/><stop offset="1" stop-color="#6a9ee0"/></radialGradient></defs><path d="M2 4c4-2 7 1 11 0 4-1 8-3 9 0v15c-2 3-6 2-9 2-5 0-8 3-11 0z" fill="url(#sb)" stroke="#16325e" stroke-width=".8"/><circle cx="21" cy="3" r="1.8" fill="#d42020"/><circle cx="2" cy="12" r="1.8" fill="#d42020"/><circle cx="18" cy="21" r="1.8" fill="#d42020"/></svg><svg style="position:absolute;left:948.0px;top:125.0px" width="24" height="24" viewBox="0 0 24 24"><path d="M4 7c-2 0-4 2-3 4 1 1 3 1 4 0zM20 7c2 0 4 2 3 4-1 1-3 1-4 0z" fill="#d2691e" stroke="#5a2a08" stroke-width=".6"/><path d="M5 5c2-4 12-4 14 0 2 4 1 10-2 14-2 3-8 3-10 0-3-4-4-10-2-14z" fill="#f08a2a" stroke="#5a2a08" stroke-width=".8"/><path d="M9 15c1 3 5 3 6 0 0 3-1 6-3 6s-3-3-3-6z" fill="#f4c890"/><circle cx="13.5" cy="10" r="2.2" fill="#fff" stroke="#333" stroke-width=".6"/><circle cx="13.8" cy="10" r="1" fill="#000"/><path d="M6 4c2-2 10-2 12 0" fill="none" stroke="#5a2a08" stroke-width="1"/></svg><svg style="position:absolute;left:1400.0px;top:459.0px" width="32" height="32" viewBox="0 0 28 28"><rect x="4" y="10" width="18" height="12" fill="#fff" stroke="#999" stroke-width=".6"/><rect x="5" y="6.5" width="3" height="4" fill="#5cc23a"/><rect x="11.5" y="6.5" width="3" height="4" fill="#5cc23a"/><rect x="18" y="6.5" width="3" height="4" fill="#5cc23a"/><rect x="5" y="21.5" width="3" height="4" fill="#5cc23a"/><rect x="11.5" y="21.5" width="3" height="4" fill="#5cc23a"/><rect x="18" y="21.5" width="3" height="4" fill="#5cc23a"/><path d="M3 9c3-6 10-7 14-3l2-2 1 8-8-1 2-2c-3-3-7-2-10 1z" fill="#5cc23a" stroke="#2f7a18" stroke-width=".7"/></svg><svg style="position:absolute;left:1400.0px;top:497.0px" width="32" height="32" viewBox="0 0 28 28"><rect x="3" y="6" width="20" height="12" rx="1" fill="#4a4a4a" stroke="#222" stroke-width=".6"/><rect x="5" y="3" width="3" height="3" fill="#888"/><rect x="11" y="3" width="3" height="3" fill="#888"/><rect x="17" y="3" width="3" height="3" fill="#888"/><path d="M14 9l5-2 5 2v7l-5 2-5-2z" fill="#3d78c8" stroke="#1d3f78" stroke-width=".6"/><path d="M6 20c3 4 9 4 12 1l2 2 1-8-8 1 2 2c-2 2-6 2-8-1z" fill="#5cc23a" stroke="#2f7a18" stroke-width=".7"/></svg><svg style="position:absolute;left:1400.0px;top:535.0px" width="32" height="32" viewBox="0 0 28 28"><path d="M2 17l11-6 13 6-11 6z" fill="#f0c020" stroke="#7a5a00" stroke-width=".7"/><path d="M2 17v3l11 6v-3zM13 26l13-6v-3l-13 6z" fill="#c09010" stroke="#7a5a00" stroke-width=".6"/><path d="M10 17l4-2 4 2-4 2z" fill="#e0a810"/><path d="M3 7c3-5 9-5 12-1l2-2 1 7-7-1 2-2c-2-2-6-2-8 0z" fill="#5cc23a" stroke="#2f7a18" stroke-width=".7" transform="translate(0 -1)"/></svg><svg style="position:absolute;left:1400.0px;top:574.0px" width="32" height="32" viewBox="0 0 28 28"><path d="M6 6v15c0 3 14 3 14 0V6" fill="#e8c020" stroke="#7a5a00" stroke-width=".7"/><ellipse cx="13" cy="6" rx="7" ry="2.5" fill="#f8e060" stroke="#7a5a00" stroke-width=".7"/><path d="M6 20c3 4 9 4 12 1l2 2 1-8-8 1 2 2c-2 2-6 2-8-1z" fill="#5cc23a" stroke="#2f7a18" stroke-width=".7"/></svg><svg style="position:absolute;left:1400.0px;top:612.0px" width="32" height="32" viewBox="0 0 28 28"><rect x="5" y="4" width="18" height="21" fill="#f2f2f2" stroke="#bbb" stroke-width=".7"/><path d="M8 8h12M8 11h12" stroke="#ccc"/><path d="M7 21l9-11 3.5 3-9 11-4 1z" fill="#f2c200" stroke="#333" stroke-width=".8"/><path d="M7 21l-.5 4 4-1z" fill="#333"/></svg></body></html>
